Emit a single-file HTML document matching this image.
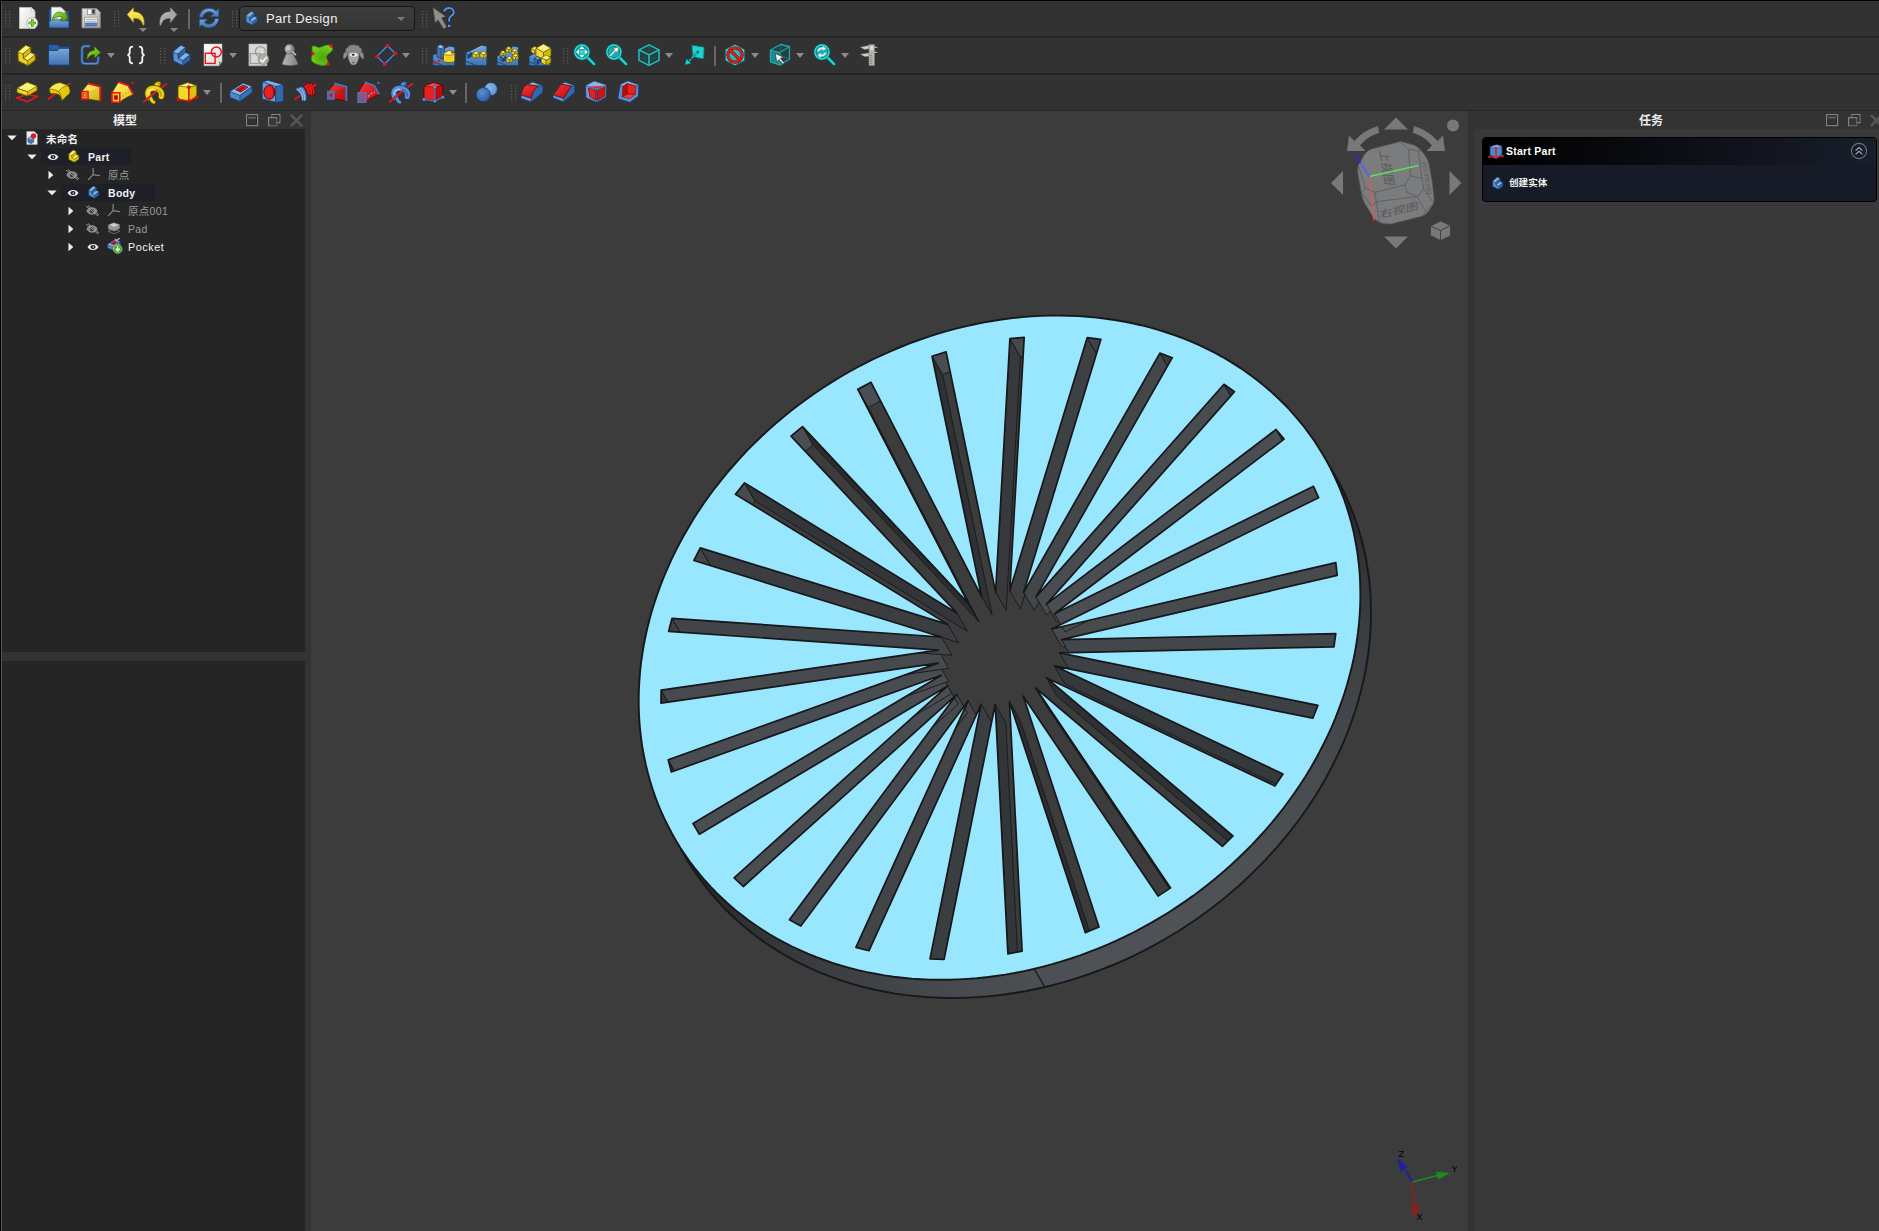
<!DOCTYPE html><html><head><meta charset="utf-8"><title>FreeCAD</title><style>
*{box-sizing:border-box;margin:0;padding:0}
html,body{width:1879px;height:1231px;overflow:hidden;background:#2f2f2f;font-family:"Liberation Sans","Noto Sans CJK SC",sans-serif;}
.abs{position:absolute}
#root{position:relative;width:1879px;height:1231px;overflow:hidden;background:#323232}
.tsep{position:absolute;left:0;width:1879px;height:2px;background:#242424}
.grip{position:absolute;width:6px;height:16px}
.vsep{position:absolute;width:2px;height:20px;background:#666}
.dd{position:absolute;width:0;height:0;border-left:4.5px solid transparent;border-right:4.5px solid transparent;border-top:5px solid #8c8c8c}
.ic{position:absolute}
.hdr{position:absolute;background:#333333;color:#ececec;font-weight:bold;font-size:12px;text-align:center;line-height:18px}
.tree{position:absolute;background:#252525}
.row{position:absolute;height:18px;line-height:18px;font-size:10.5px;white-space:nowrap}
.hl{position:absolute;background:#1d2027;height:17px}
.b{font-weight:bold;color:#f2f2f2;letter-spacing:0.3px}
.g{color:#9b9b9b;letter-spacing:0.3px}
.w{color:#f3f3f3;letter-spacing:0.55px;font-size:10.8px}
</style></head><body><div id="root">
<svg width="0" height="0" style="position:absolute"><defs>
<linearGradient id="gy" x1="0" y1="0" x2="1" y2="1"><stop offset="0" stop-color="#fff27a"/><stop offset="1" stop-color="#e6c80a"/></linearGradient>
<linearGradient id="gb" x1="0" y1="0" x2="0" y2="1"><stop offset="0" stop-color="#7aa7d6"/><stop offset="1" stop-color="#3f72b0"/></linearGradient>
<linearGradient id="gr" x1="0" y1="0" x2="1" y2="1"><stop offset="0" stop-color="#f23a3a"/><stop offset="1" stop-color="#c40808"/></linearGradient>
<linearGradient id="gg" x1="0" y1="0" x2="1" y2="1"><stop offset="0" stop-color="#9be63f"/><stop offset="1" stop-color="#4e9a06"/></linearGradient>
<linearGradient id="gp" x1="0" y1="0" x2="1" y2="1"><stop offset="0" stop-color="#ffffff"/><stop offset="1" stop-color="#d6d7d3"/></linearGradient>
<linearGradient id="gs" x1="0" y1="0" x2="1" y2="1"><stop offset="0" stop-color="#e3e3df"/><stop offset="1" stop-color="#a9aaa5"/></linearGradient>
<linearGradient id="gc" x1="0" y1="0" x2="1" y2="1"><stop offset="0" stop-color="#3be3e5"/><stop offset="1" stop-color="#12a9ab"/></linearGradient>
</defs></svg>
<div class="abs" style="left:0;top:0;width:1879px;height:1px;background:#050505"></div>
<div class="tsep" style="top:36px"></div>
<div class="tsep" style="top:73px"></div>
<div class="tsep" style="top:110px;height:1px;background:#262626"></div>
<svg class="grip" style="left:5px;top:11px" viewBox="0 0 6 16"><rect x="0" y="0.0" width="1.2" height="1.2" fill="#5a5a5a"/><rect x="0" y="2.9" width="1.2" height="1.2" fill="#5a5a5a"/><rect x="0" y="5.8" width="1.2" height="1.2" fill="#5a5a5a"/><rect x="0" y="8.7" width="1.2" height="1.2" fill="#5a5a5a"/><rect x="0" y="11.6" width="1.2" height="1.2" fill="#5a5a5a"/><rect x="0" y="14.5" width="1.2" height="1.2" fill="#5a5a5a"/><rect x="4" y="0.0" width="1.2" height="1.2" fill="#5a5a5a"/><rect x="4" y="2.9" width="1.2" height="1.2" fill="#5a5a5a"/><rect x="4" y="5.8" width="1.2" height="1.2" fill="#5a5a5a"/><rect x="4" y="8.7" width="1.2" height="1.2" fill="#5a5a5a"/><rect x="4" y="11.6" width="1.2" height="1.2" fill="#5a5a5a"/><rect x="4" y="14.5" width="1.2" height="1.2" fill="#5a5a5a"/></svg>
<svg class="ic" style="left:17.0px;top:6.0px" width="24" height="24" viewBox="0 0 24 24"><path d="M2.500 1.500h11.800l3.700 3.700v17.300h-15.500z" fill="url(#gp)" stroke="#bfc0bc" stroke-width="0.800"/><path d="M14.300 1.500v3.700h3.700z" fill="#f4f4f2" stroke="#b5b6b2" stroke-width="0.6"/><circle cx="15.3" cy="17" r="5.5" fill="#f5f5f3" stroke="#a8a9a5" stroke-width="0.8"/><path d="M15.3 13.2v7.6M11.5 17h7.6" stroke="#3d8a07" stroke-width="2.6"/><path d="M15.3 13.8v6.4M12.1 17h6.4" stroke="#7fd32a" stroke-width="1.3"/></svg>
<svg class="ic" style="left:47.0px;top:6.0px" width="24" height="24" viewBox="0 0 24 24"><path d="M2 3h3v18h-3zM19 5h3v16h-3z" fill="#2c5a9b" stroke="#173a66" stroke-width="0.6"/><path d="M4.5 1.2h9.5l4.5 4.5v12h-14z" fill="url(#gp)" stroke="#bfc0bc" stroke-width="0.7"/><path d="M2 15.5c3-0.2 5-2.5 8-2.3c2 0.2 2.5 1.6 5 1.6h7v7.2h-20z" fill="url(#gb)" stroke="#173a66" stroke-width="0.8"/><path d="M5.400 13.800C5.800 9.500 8.500 6.300 12 6.200C14 6.200 15.500 6.800 16.800 7.800L18.800 5.800L20.800 13.200L13 14.200L15 11.200C13.500 10.300 12 10.200 10.500 10.700C8.500 11.300 6.800 12.400 5.400 13.800Z" fill="url(#gg)" stroke="#3b7a05" stroke-width="0.800" stroke-linejoin="round"/><path d="M2 15.6c3-0.2 5-2.5 8-2.3c1.2 0.1 1.8 0.6 2.6 1v1.5h-10.6z" fill="#6a99cc"/></svg>
<svg class="ic" style="left:79.0px;top:6.0px" width="24" height="24" viewBox="0 0 24 24"><path d="M3 2.5h14.5l3.7 3.7v15.6h-18.2z" fill="url(#gs)" stroke="#8f908b" stroke-width="0.9"/><rect x="8" y="3" width="8.6" height="5.8" fill="#8c8d88"/><rect x="8.8" y="3.4" width="3.6" height="4.6" fill="#fbfbfa"/><rect x="13.5" y="3.8" width="1.8" height="3.6" fill="#2b2b2b"/><rect x="5.6" y="11.2" width="13" height="9.6" fill="#f1f1ef" stroke="#8f908b" stroke-width="0.7"/><path d="M6.6 13.4h11M6.6 15.4h11" stroke="#a6a7a2" stroke-width="0.9"/><rect x="6.6" y="17" width="11" height="3" fill="#4f86c6" stroke="#2f5f9e" stroke-width="0.6"/></svg>
<svg class="grip" style="left:114px;top:11px" viewBox="0 0 6 16"><rect x="0" y="0.0" width="1.2" height="1.2" fill="#5a5a5a"/><rect x="0" y="2.9" width="1.2" height="1.2" fill="#5a5a5a"/><rect x="0" y="5.8" width="1.2" height="1.2" fill="#5a5a5a"/><rect x="0" y="8.7" width="1.2" height="1.2" fill="#5a5a5a"/><rect x="0" y="11.6" width="1.2" height="1.2" fill="#5a5a5a"/><rect x="0" y="14.5" width="1.2" height="1.2" fill="#5a5a5a"/><rect x="4" y="0.0" width="1.2" height="1.2" fill="#5a5a5a"/><rect x="4" y="2.9" width="1.2" height="1.2" fill="#5a5a5a"/><rect x="4" y="5.8" width="1.2" height="1.2" fill="#5a5a5a"/><rect x="4" y="8.7" width="1.2" height="1.2" fill="#5a5a5a"/><rect x="4" y="11.6" width="1.2" height="1.2" fill="#5a5a5a"/><rect x="4" y="14.5" width="1.2" height="1.2" fill="#5a5a5a"/></svg>
<svg class="ic" style="left:126.0px;top:6.0px" width="22" height="22" viewBox="0 0 24 24"><path d="M1.3 9.2L8.2 1.8v4.6c7.5 0 12 4.6 11.6 13.2c-0.1 1.6-0.8 2.2-1.4 0.6c-1.6-5-4.6-7-10.2-6.8v4.6z" fill="url(#gy)" stroke="#a8930a" stroke-width="0.7" stroke-linejoin="round"/><path d="M9 8c6 0 9.5 3.6 9.7 9.5" stroke="#fff9b0" stroke-width="1" fill="none" opacity="0.7"/></svg>
<svg class="ic" style="left:156.0px;top:6.0px" width="22" height="22" viewBox="0 0 24 24"><path d="M22.7 9.2L15.8 1.8v4.6c-7.5 0-12 4.6-11.6 13.2c0.1 1.6 0.8 2.2 1.4 0.6c1.6-5 4.6-7 10.2-6.8v4.6z" fill="#a9a9a9" stroke="#8c8c8c" stroke-width="0.7" stroke-linejoin="round"/><path d="M15 8c-6 0-9.5 3.6-9.7 9.5" stroke="#c9c9c9" stroke-width="1" fill="none" opacity="0.7"/></svg>
<div class="dd" style="left:138.5px;top:27.5px;border-left-width:4.5px;border-right-width:4.5px;border-top-width:4.5px;border-top-color:#858585"></div>
<div class="dd" style="left:169.5px;top:27.5px;border-left-width:4.5px;border-right-width:4.5px;border-top-width:4.5px;border-top-color:#858585"></div>
<div class="vsep" style="left:188.0px;top:9.0px"></div>
<svg class="ic" style="left:197.0px;top:6.0px" width="24" height="24" viewBox="0 0 24 24"><path d="M2.2 11.5c0.3-5.4 4.4-9.3 9.8-9.3c3 0 5.3 1 7.2 2.9l2.6-2.6v8.3h-8.3l3.1-3.1c-1.3-1.2-2.7-1.8-4.6-1.8c-3.2 0-5.6 2.3-6 5.6z" fill="url(#gb)" stroke="#1d4a85" stroke-width="0.8" stroke-linejoin="round"/><path d="M21.8 12.5c-0.3 5.4-4.4 9.3-9.8 9.3c-3 0-5.3-1-7.2-2.9l-2.6 2.6v-8.3h8.3l-3.1 3.1c1.3 1.2 2.7 1.8 4.6 1.8c3.2 0 5.6-2.3 6-5.6z" fill="url(#gb)" stroke="#1d4a85" stroke-width="0.8" stroke-linejoin="round"/></svg>
<svg class="grip" style="left:232px;top:11px" viewBox="0 0 6 16"><rect x="0" y="0.0" width="1.2" height="1.2" fill="#5a5a5a"/><rect x="0" y="2.9" width="1.2" height="1.2" fill="#5a5a5a"/><rect x="0" y="5.8" width="1.2" height="1.2" fill="#5a5a5a"/><rect x="0" y="8.7" width="1.2" height="1.2" fill="#5a5a5a"/><rect x="0" y="11.6" width="1.2" height="1.2" fill="#5a5a5a"/><rect x="0" y="14.5" width="1.2" height="1.2" fill="#5a5a5a"/><rect x="4" y="0.0" width="1.2" height="1.2" fill="#5a5a5a"/><rect x="4" y="2.9" width="1.2" height="1.2" fill="#5a5a5a"/><rect x="4" y="5.8" width="1.2" height="1.2" fill="#5a5a5a"/><rect x="4" y="8.7" width="1.2" height="1.2" fill="#5a5a5a"/><rect x="4" y="11.6" width="1.2" height="1.2" fill="#5a5a5a"/><rect x="4" y="14.5" width="1.2" height="1.2" fill="#5a5a5a"/></svg>
<div class="abs" style="left:239px;top:6px;width:176px;height:25px;border:1px solid #151515;border-radius:4px;background:linear-gradient(#3d3d3d,#343434)"></div>
<svg class="ic" style="left:244.0px;top:10.0px" width="16" height="16" viewBox="0 0 24 24"><path d="M2.800 9L10.800 2.300L15.600 4.400L15.600 9.600L20.200 11.700L20.200 17.100L12.700 22.800L3.100 18.200Z" fill="#5b8fd0" stroke="#173a66" stroke-width="1.300" stroke-linejoin="round"/><path d="M2.800 9L10.800 2.300L15.600 4.400L8 10.900Z" fill="#86b2e3" stroke="#173a66" stroke-width="0.600" stroke-linejoin="round"/><path d="M8 10.900L15.600 4.400L15.600 9.600L8.500 15.500Z" fill="#2f64aa" stroke="#173a66" stroke-width="0.600" stroke-linejoin="round"/><path d="M8.500 15.500L15.600 9.600L20.200 11.700L12.700 17.800Z" fill="#86b2e3" stroke="#173a66" stroke-width="0.600" stroke-linejoin="round"/><path d="M12.700 17.800L20.200 11.700L20.200 17.100L12.700 22.800Z" fill="#2f64aa" stroke="#173a66" stroke-width="0.600" stroke-linejoin="round"/><path d="M8 10.900L8.500 15.500L12.700 17.800" fill="none" stroke="#173a66" stroke-width="0.600"/></svg>
<div class="abs" style="left:266px;top:11px;font-size:13px;line-height:16px;color:#f0f0f0;letter-spacing:0.35px">Part Design</div>
<div class="dd" style="left:397px;top:16.5px;border-left-width:4px;border-right-width:4px;border-top-width:4px;border-top-color:#777"></div>
<svg class="grip" style="left:422px;top:11px" viewBox="0 0 6 16"><rect x="0" y="0.0" width="1.2" height="1.2" fill="#5a5a5a"/><rect x="0" y="2.9" width="1.2" height="1.2" fill="#5a5a5a"/><rect x="0" y="5.8" width="1.2" height="1.2" fill="#5a5a5a"/><rect x="0" y="8.7" width="1.2" height="1.2" fill="#5a5a5a"/><rect x="0" y="11.6" width="1.2" height="1.2" fill="#5a5a5a"/><rect x="0" y="14.5" width="1.2" height="1.2" fill="#5a5a5a"/><rect x="4" y="0.0" width="1.2" height="1.2" fill="#5a5a5a"/><rect x="4" y="2.9" width="1.2" height="1.2" fill="#5a5a5a"/><rect x="4" y="5.8" width="1.2" height="1.2" fill="#5a5a5a"/><rect x="4" y="8.7" width="1.2" height="1.2" fill="#5a5a5a"/><rect x="4" y="11.6" width="1.2" height="1.2" fill="#5a5a5a"/><rect x="4" y="14.5" width="1.2" height="1.2" fill="#5a5a5a"/></svg>
<svg class="ic" style="left:432.0px;top:6.0px" width="24" height="24" viewBox="0 0 24 24"><path d="M1 1.600L13.800 10.500L9.600 11.800L14.600 20.900L11.700 22.800L6 13.900L3.100 16.800Z" fill="#8f9189" stroke="#4a4c46" stroke-width="0.700" stroke-linejoin="round"/><path d="M12.300 4.800C13.500 2.600 15.500 2 17.200 2C20 2 21.800 4 21.800 6.400C21.800 10 17.200 9.500 17.200 13V15" fill="none" stroke="#10233f" stroke-width="3.200" stroke-linecap="round"/><path d="M12.300 4.800C13.500 2.600 15.500 2 17.200 2C20 2 21.800 4 21.800 6.400C21.800 10 17.200 9.500 17.200 13V15" fill="none" stroke="#5b94dc" stroke-width="1.900" stroke-linecap="round"/><circle cx="17.200" cy="19.900" r="2" fill="#10233f"/><circle cx="17.200" cy="19.900" r="1.400" fill="#5b94dc"/></svg>
<svg class="grip" style="left:5px;top:48px" viewBox="0 0 6 16"><rect x="0" y="0.0" width="1.2" height="1.2" fill="#5a5a5a"/><rect x="0" y="2.9" width="1.2" height="1.2" fill="#5a5a5a"/><rect x="0" y="5.8" width="1.2" height="1.2" fill="#5a5a5a"/><rect x="0" y="8.7" width="1.2" height="1.2" fill="#5a5a5a"/><rect x="0" y="11.6" width="1.2" height="1.2" fill="#5a5a5a"/><rect x="0" y="14.5" width="1.2" height="1.2" fill="#5a5a5a"/><rect x="4" y="0.0" width="1.2" height="1.2" fill="#5a5a5a"/><rect x="4" y="2.9" width="1.2" height="1.2" fill="#5a5a5a"/><rect x="4" y="5.8" width="1.2" height="1.2" fill="#5a5a5a"/><rect x="4" y="8.7" width="1.2" height="1.2" fill="#5a5a5a"/><rect x="4" y="11.6" width="1.2" height="1.2" fill="#5a5a5a"/><rect x="4" y="14.5" width="1.2" height="1.2" fill="#5a5a5a"/></svg>
<svg class="ic" style="left:15.0px;top:43.0px" width="24" height="24" viewBox="0 0 24 24"><path d="M2.800 9L10.800 2.300L15.600 4.400L15.600 9.600L20.200 11.700L20.200 17.100L12.700 22.800L3.100 18.200Z" fill="#ecd21c" stroke="#5c5200" stroke-width="1.300" stroke-linejoin="round"/><path d="M2.800 9L10.800 2.300L15.600 4.400L8 10.900Z" fill="#fff27a" stroke="#5c5200" stroke-width="0.600" stroke-linejoin="round"/><path d="M8 10.900L15.600 4.400L15.600 9.600L8.500 15.500Z" fill="#d8bc0c" stroke="#5c5200" stroke-width="0.600" stroke-linejoin="round"/><path d="M8.500 15.500L15.600 9.600L20.200 11.700L12.700 17.800Z" fill="#fff27a" stroke="#5c5200" stroke-width="0.600" stroke-linejoin="round"/><path d="M12.700 17.800L20.200 11.700L20.200 17.100L12.700 22.800Z" fill="#d8bc0c" stroke="#5c5200" stroke-width="0.600" stroke-linejoin="round"/><path d="M8 10.900L8.500 15.500L12.700 17.800" fill="none" stroke="#5c5200" stroke-width="0.600"/></svg>
<svg class="ic" style="left:47.0px;top:43.0px" width="24" height="24" viewBox="0 0 24 24"><path d="M1.500 1.500h8.500l2 2.200h10.500v18.500h-21z" fill="#2c5ea6" stroke="#173a66" stroke-width="0.9" stroke-linejoin="round"/><path d="M1.500 7.400h8.800l2-2.200h10.200v17h-21z" fill="url(#gb)" stroke="#173a66" stroke-width="0.9" stroke-linejoin="round"/></svg>
<svg class="ic" style="left:79.0px;top:43.0px" width="24" height="24" viewBox="0 0 24 24"><g transform="translate(1.2,1.2) scale(0.9)"><path d="M10 2.200h-4.500c-2.200 0-3.500 1.300-3.500 3.500v12.300c0 2.200 1.300 3.500 3.500 3.500h11c2.200 0 3.500-1.300 3.500-3.500v-3.500" fill="none" stroke="#2c5a9b" stroke-width="3" stroke-linecap="round"/><path d="M10 2.200h-4.500c-2.200 0-3.500 1.300-3.500 3.500v12.300c0 2.200 1.300 3.500 3.500 3.500h11c2.200 0 3.500-1.300 3.500-3.500v-3.500" fill="none" stroke="#5b8fd0" stroke-width="1.300" stroke-linecap="round"/><path d="M7.800 16.800c-0.600-5.800 2.400-9.600 8-9.800v-4.200l7 6.400l-7 6.200v-4c-3.600-0.200-6 1.600-8 5.400z" fill="url(#gg)" stroke="#3b7a05" stroke-width="0.800" stroke-linejoin="round"/></g></svg>
<div class="dd" style="left:107.0px;top:53.0px"></div>
<svg class="ic" style="left:124.0px;top:43.0px" width="24" height="24" viewBox="0 0 24 24"><g transform="translate(1.2,1.2) scale(0.9)"><path d="M8.600 2.800c-2.800 0-3.600 1-3.600 3.200v3.200c0 1.600-0.800 2.400-2.400 2.800c1.600 0.400 2.400 1.200 2.400 2.800v3.200c0 2.200 0.800 3.200 3.600 3.200M15.400 2.800c2.800 0 3.600 1 3.600 3.200v3.200c0 1.600 0.800 2.400 2.400 2.800c-1.600 0.400-2.400 1.200-2.400 2.800v3.200c0 2.200-0.800 3.200-3.600 3.200" fill="none" stroke="#f4f4f4" stroke-width="2"/></g></svg>
<svg class="grip" style="left:160px;top:48px" viewBox="0 0 6 16"><rect x="0" y="0.0" width="1.2" height="1.2" fill="#5a5a5a"/><rect x="0" y="2.9" width="1.2" height="1.2" fill="#5a5a5a"/><rect x="0" y="5.8" width="1.2" height="1.2" fill="#5a5a5a"/><rect x="0" y="8.7" width="1.2" height="1.2" fill="#5a5a5a"/><rect x="0" y="11.6" width="1.2" height="1.2" fill="#5a5a5a"/><rect x="0" y="14.5" width="1.2" height="1.2" fill="#5a5a5a"/><rect x="4" y="0.0" width="1.2" height="1.2" fill="#5a5a5a"/><rect x="4" y="2.9" width="1.2" height="1.2" fill="#5a5a5a"/><rect x="4" y="5.8" width="1.2" height="1.2" fill="#5a5a5a"/><rect x="4" y="8.7" width="1.2" height="1.2" fill="#5a5a5a"/><rect x="4" y="11.6" width="1.2" height="1.2" fill="#5a5a5a"/><rect x="4" y="14.5" width="1.2" height="1.2" fill="#5a5a5a"/></svg>
<svg class="ic" style="left:169.5px;top:43.0px" width="24" height="24" viewBox="0 0 24 24"><path d="M2.800 9L10.800 2.300L15.600 4.400L15.600 9.600L20.200 11.700L20.200 17.100L12.700 22.800L3.100 18.200Z" fill="#5b8fd0" stroke="#173a66" stroke-width="1.300" stroke-linejoin="round"/><path d="M2.800 9L10.800 2.300L15.600 4.400L8 10.900Z" fill="#86b2e3" stroke="#173a66" stroke-width="0.600" stroke-linejoin="round"/><path d="M8 10.900L15.600 4.400L15.600 9.600L8.500 15.500Z" fill="#2f64aa" stroke="#173a66" stroke-width="0.600" stroke-linejoin="round"/><path d="M8.500 15.500L15.600 9.600L20.200 11.700L12.700 17.800Z" fill="#86b2e3" stroke="#173a66" stroke-width="0.600" stroke-linejoin="round"/><path d="M12.700 17.800L20.200 11.700L20.200 17.100L12.700 22.800Z" fill="#2f64aa" stroke="#173a66" stroke-width="0.600" stroke-linejoin="round"/><path d="M8 10.900L8.500 15.500L12.700 17.800" fill="none" stroke="#173a66" stroke-width="0.600"/></svg>
<svg class="ic" style="left:201.0px;top:43.0px" width="24" height="24" viewBox="0 0 24 24"><path d="M3 1h18v17.800l-3 4h-15z" fill="url(#gp)" stroke="#c8c9c5" stroke-width="0.500"/><path d="M18 18.800v4l3-4z" fill="#8f908c"/><circle cx="15.300" cy="9" r="5" fill="none" stroke="#e8141c" stroke-width="1.400"/><rect x="4.300" y="10.300" width="9.800" height="10.100" fill="none" stroke="#e8141c" stroke-width="1.400"/></svg>
<div class="dd" style="left:229.0px;top:53.0px"></div>
<svg class="ic" style="left:247.0px;top:43.0px" width="24" height="24" viewBox="0 0 24 24"><path d="M1.900 1h18v21.800h-18z" fill="#d9dad6" stroke="#a9aaa6" stroke-width="0.600"/><circle cx="13.400" cy="8.600" r="5" fill="none" stroke="#9b9c98" stroke-width="1.300"/><rect x="3.400" y="10.600" width="9.600" height="9.900" fill="none" stroke="#9b9c98" stroke-width="1.300"/><circle cx="16.400" cy="16.300" r="5.400" fill="#a9aaa6" stroke="#8d8e8a" stroke-width="0.700"/><path d="M13.300 16.500l2.300 2.500l4.200-5.200" fill="none" stroke="#ececea" stroke-width="1.900"/></svg>
<svg class="ic" style="left:278.0px;top:43.0px" width="24" height="24" viewBox="0 0 24 24"><defs><linearGradient id="gpw" x1="0" y1="0" x2="1" y2="0"><stop offset="0" stop-color="#b9bab6"/><stop offset="1" stop-color="#7f807c"/></linearGradient></defs><path d="M4.200 21.300c1-4 3-7 4.200-10.700h6.600c1.200 3.700 3.900 6.700 4.900 10.700c-4 1.500-11.700 1.500-15.700 0z" fill="url(#gpw)" stroke="#6e6f6b" stroke-width="0.600"/><circle cx="11.500" cy="6" r="4.700" fill="url(#gpw)" stroke="#6e6f6b" stroke-width="0.600"/><circle cx="10.500" cy="5" r="2.300" fill="#d5d6d2" opacity="0.700"/><path d="M14.500 8.500l3.500 3.700" stroke="#c9cac6" stroke-width="1.500"/></svg>
<svg class="ic" style="left:311.0px;top:43.0px" width="24" height="24" viewBox="0 0 24 24"><defs><radialGradient id="ggr" cx="0.55" cy="0.6" r="0.6"><stop offset="0" stop-color="#4aa70c"/><stop offset="1" stop-color="#6fd11c"/></radialGradient></defs><path d="M1.300 3.200c2.500-1 5 1.800 7.500 1.200c3.500-0.800 7-3.500 11.200-1.700c1.500 1.200 1.800 2.800 1.300 4.200c-1.200 3-5.300 3.800-5.800 6.500c-0.500 2.800 2.200 5 1.600 7.700c-2.500 1.600-5.800 1.600-8.600 0.800c-3-0.800-6.500-1.800-8-4.400c-0.600-2.500 0.800-4.600 1-7.100c0.200-2.500-1-5-0.200-7.200z" fill="url(#ggr)" stroke="#3f8f08" stroke-width="0.800"/><circle cx="20.200" cy="3" r="1.800" fill="#e8141c"/><circle cx="1.900" cy="10.600" r="1.800" fill="#e8141c"/><circle cx="17.100" cy="21" r="1.800" fill="#e8141c"/></svg>
<svg class="ic" style="left:341.0px;top:43.0px" width="24" height="24" viewBox="0 0 24 24"><path d="M5.500 8.500c-2.500 0.500-3.800 3.500-3 7.500c1.800-0.500 3.200-2 4-4.500zM19.500 8.500c2.500 0.500 3.800 3.500 3 7.500c-1.800-0.500-3.200-2-4-4.500z" fill="#8d8e90" stroke="#66676a" stroke-width="0.500"/><path d="M5 9c-1-2.500 0.300-4.300 2-4.600c0.500-1.800 2.300-2.600 3.800-2c1-1 2.800-1 3.800 0c1.500-0.600 3.300 0.200 3.800 2c1.700 0.300 3 2.100 2 4.600c-1 1.800-3 2.300-4 2h-7.400c-1 0.300-3-0.200-4-2z" fill="#858688" stroke="#66676a" stroke-width="0.500"/><path d="M7.200 10c1.500-1.500 9.100-1.500 10.600 0c0.800 3.500-0.500 7-1.800 9.500c-0.800 1.800-2 2.500-3.500 2.500s-2.700-0.700-3.500-2.500c-1.300-2.500-2.600-6-1.800-9.500z" fill="#a3a4a6" stroke="#707173" stroke-width="0.500"/><ellipse cx="12.700" cy="11.800" rx="4" ry="1.900" fill="#ececec"/><ellipse cx="12.200" cy="11.800" rx="1.500" ry="1" fill="#2a2a2a"/><path d="M11 19.300h3M12.500 19.300v1.500" stroke="#4a4a4a" stroke-width="0.700"/></svg>
<svg class="ic" style="left:374.0px;top:43.0px" width="24" height="24" viewBox="0 0 24 24"><path d="M13.500 2.800l7.700 7.600l-10.600 10.700l-7.600-7.700z" fill="none" stroke="#173a66" stroke-width="2.400" stroke-linejoin="round"/><path d="M13.500 2.800l7.700 7.600l-10.600 10.700l-7.600-7.700z" fill="none" stroke="#4f8fd6" stroke-width="1.300" stroke-linejoin="round"/><circle cx="13.500" cy="2.800" r="1.900" fill="#e8141c"/><circle cx="21.200" cy="10.400" r="1.900" fill="#e8141c"/><circle cx="10.600" cy="21.100" r="1.900" fill="#e8141c"/><circle cx="3" cy="13.400" r="1.900" fill="#e8141c"/></svg>
<div class="dd" style="left:402.0px;top:53.0px"></div>
<svg class="grip" style="left:422px;top:48px" viewBox="0 0 6 16"><rect x="0" y="0.0" width="1.2" height="1.2" fill="#5a5a5a"/><rect x="0" y="2.9" width="1.2" height="1.2" fill="#5a5a5a"/><rect x="0" y="5.8" width="1.2" height="1.2" fill="#5a5a5a"/><rect x="0" y="8.7" width="1.2" height="1.2" fill="#5a5a5a"/><rect x="0" y="11.6" width="1.2" height="1.2" fill="#5a5a5a"/><rect x="0" y="14.5" width="1.2" height="1.2" fill="#5a5a5a"/><rect x="4" y="0.0" width="1.2" height="1.2" fill="#5a5a5a"/><rect x="4" y="2.9" width="1.2" height="1.2" fill="#5a5a5a"/><rect x="4" y="5.8" width="1.2" height="1.2" fill="#5a5a5a"/><rect x="4" y="8.7" width="1.2" height="1.2" fill="#5a5a5a"/><rect x="4" y="11.6" width="1.2" height="1.2" fill="#5a5a5a"/><rect x="4" y="14.5" width="1.2" height="1.2" fill="#5a5a5a"/></svg>
<svg class="ic" style="left:432.0px;top:43.0px" width="24" height="24" viewBox="0 0 24 24"><path d="M0.800 12l4.500-1.800l7.500-5l4.800-2.200l5.200 1.200v18.600h-22z" fill="url(#gb)" stroke="#173a66" stroke-width="0.900" stroke-linejoin="round"/><path d="M0.800 18l10 4.600" stroke="#173a66" stroke-width="0.800"/><path d="M4.900 4.200l3.200-2.600l4.300 1.800v10l-3.400 2.300l-4.100-2z" fill="#3f72b0" stroke="#173a66" stroke-width="0.800" stroke-linejoin="round"/><path d="M4.900 4.200l3.200-2.600l4.300 1.800l-3.400 2.400z" fill="#9cc0ea" stroke="#173a66" stroke-width="0.600" stroke-linejoin="round"/><path d="M9 5.800v9.900" stroke="#173a66" stroke-width="0.600"/><path d="M11.600 10.500l5.600-3.300l5.600 3.300v6.800c0 3.200-11.200 3.200-11.200 0z" fill="#edd11a" stroke="#5c5200" stroke-width="0.900" stroke-linejoin="round"/><path d="M11.600 10.500l5.600-3.300l5.600 3.300c0 2.200-11.200 2.200-11.200 0z" fill="#fff27a" stroke="#5c5200" stroke-width="0.600" stroke-linejoin="round"/><path d="M12.500 12.500v6M21.500 12.500v6" stroke="#fff7a0" stroke-width="0.800" opacity="0.600"/><path d="M2.300 20.600l8.500-5.200M19.500 10.200l3.300-2" stroke="#e8141c" stroke-width="1.700" stroke-dasharray="2.600 1.600"/></svg>
<svg class="ic" style="left:464.0px;top:43.0px" width="24" height="24" viewBox="0 0 24 24"><path d="M1.300 10.500l16.400-8.200l5.200 0.800v19.700h-21.600z" fill="url(#gb)" stroke="#173a66" stroke-width="0.900" stroke-linejoin="round"/><path d="M1.300 17.800l11.500 5" stroke="#173a66" stroke-width="0.800"/><path d="M2 11l15.700-7.800" stroke="#a9c8ea" stroke-width="0.600"/><path d="M1.3 10.1l3.2 -1.8l3.2 1.8l-3.2 1.8z" fill="#6a9bd6" stroke="#0f2a52" stroke-width="0.6" stroke-linejoin="round"/><path d="M1.3 10.1l3.2 1.8v3.2l-3.2 -1.8z" fill="#3f72b0" stroke="#0f2a52" stroke-width="0.6" stroke-linejoin="round"/><path d="M4.5 11.9l3.2 -1.8v3.2l-3.2 1.8z" fill="#1f4f91" stroke="#0f2a52" stroke-width="0.6" stroke-linejoin="round"/><path d="M8.6 10.2l3.4 -1.9l3.4 1.9l-3.4 1.9z" fill="#fff27a" stroke="#5c5200" stroke-width="0.6" stroke-linejoin="round"/><path d="M8.6 10.2l3.4 1.9v3.4l-3.4 -1.9z" fill="#f2d92c" stroke="#5c5200" stroke-width="0.6" stroke-linejoin="round"/><path d="M12.0 12.1l3.4 -1.9v3.4l-3.4 1.9z" fill="#d4b808" stroke="#5c5200" stroke-width="0.6" stroke-linejoin="round"/><path d="M16.0 10.2l3.4 -1.9l3.4 1.9l-3.4 1.9z" fill="#fff27a" stroke="#5c5200" stroke-width="0.6" stroke-linejoin="round"/><path d="M16.0 10.2l3.4 1.9v3.4l-3.4 -1.9z" fill="#f2d92c" stroke="#5c5200" stroke-width="0.6" stroke-linejoin="round"/><path d="M19.4 12.1l3.4 -1.9v3.4l-3.4 1.9z" fill="#d4b808" stroke="#5c5200" stroke-width="0.6" stroke-linejoin="round"/></svg>
<svg class="ic" style="left:496.0px;top:43.0px" width="24" height="24" viewBox="0 0 24 24"><path d="M1 13.300l16.400-10l5.200 0.800v18.700h-21.600z" fill="url(#gb)" stroke="#173a66" stroke-width="0.900" stroke-linejoin="round"/><path d="M1 18.500l10 4.300" stroke="#173a66" stroke-width="0.800"/><path d="M4.2 9.2l2.8 -1.6l2.8 1.6l-2.8 1.6z" fill="#fff27a" stroke="#5c5200" stroke-width="0.6" stroke-linejoin="round"/><path d="M4.2 9.2l2.8 1.6v2.8l-2.8 -1.6z" fill="#f2d92c" stroke="#5c5200" stroke-width="0.6" stroke-linejoin="round"/><path d="M7.0 10.7l2.8 -1.6v2.8l-2.8 1.6z" fill="#d4b808" stroke="#5c5200" stroke-width="0.6" stroke-linejoin="round"/><path d="M9.8 5.2l2.9 -1.6l2.9 1.6l-2.9 1.6z" fill="#fff27a" stroke="#5c5200" stroke-width="0.6" stroke-linejoin="round"/><path d="M9.8 5.2l2.9 1.6v2.9l-2.9 -1.6z" fill="#f2d92c" stroke="#5c5200" stroke-width="0.6" stroke-linejoin="round"/><path d="M12.7 6.8l2.9 -1.6v2.9l-2.9 1.6z" fill="#d4b808" stroke="#5c5200" stroke-width="0.6" stroke-linejoin="round"/><path d="M15.8 7.5l3.0 -1.7l3.0 1.7l-3.0 1.7z" fill="#fff27a" stroke="#5c5200" stroke-width="0.6" stroke-linejoin="round"/><path d="M15.8 7.5l3.0 1.7v3.0l-3.0 -1.7z" fill="#f2d92c" stroke="#5c5200" stroke-width="0.6" stroke-linejoin="round"/><path d="M18.8 9.2l3.0 -1.7v3.0l-3.0 1.7z" fill="#d4b808" stroke="#5c5200" stroke-width="0.6" stroke-linejoin="round"/><path d="M16.5 12.5l3.0 -1.7l3.0 1.7l-3.0 1.7z" fill="#fff27a" stroke="#5c5200" stroke-width="0.6" stroke-linejoin="round"/><path d="M16.5 12.5l3.0 1.7v3.0l-3.0 -1.7z" fill="#f2d92c" stroke="#5c5200" stroke-width="0.6" stroke-linejoin="round"/><path d="M19.5 14.2l3.0 -1.7v3.0l-3.0 1.7z" fill="#d4b808" stroke="#5c5200" stroke-width="0.6" stroke-linejoin="round"/><path d="M4.2 14.0l2.9 -1.6l2.9 1.6l-2.9 1.6z" fill="#6a9bd6" stroke="#0f2a52" stroke-width="0.6" stroke-linejoin="round"/><path d="M4.2 14.0l2.9 1.6v2.9l-2.9 -1.6z" fill="#3f72b0" stroke="#0f2a52" stroke-width="0.6" stroke-linejoin="round"/><path d="M7.1 15.6l2.9 -1.6v2.9l-2.9 1.6z" fill="#1f4f91" stroke="#0f2a52" stroke-width="0.6" stroke-linejoin="round"/><path d="M10.2 15.2l3.1 -1.8l3.1 1.8l-3.1 1.8z" fill="#fff27a" stroke="#5c5200" stroke-width="0.6" stroke-linejoin="round"/><path d="M10.2 15.2l3.1 1.8v3.1l-3.1 -1.8z" fill="#f2d92c" stroke="#5c5200" stroke-width="0.6" stroke-linejoin="round"/><path d="M13.3 16.9l3.1 -1.8v3.1l-3.1 1.8z" fill="#d4b808" stroke="#5c5200" stroke-width="0.6" stroke-linejoin="round"/></svg>
<svg class="ic" style="left:528.0px;top:43.0px" width="24" height="24" viewBox="0 0 24 24"><path d="M1 13.300l16.400-10l5.200 0.800v18.700h-21.600z" fill="url(#gb)" stroke="#173a66" stroke-width="0.900" stroke-linejoin="round"/><path d="M1 18.500l10 4.300" stroke="#173a66" stroke-width="0.800"/><path d="M3.2 5.6l3.5 -2.0l3.5 2.0l-3.5 2.0z" fill="#fff27a" stroke="#5c5200" stroke-width="0.6" stroke-linejoin="round"/><path d="M3.2 5.6l3.5 2.0v3.5l-3.5 -2.0z" fill="#f2d92c" stroke="#5c5200" stroke-width="0.6" stroke-linejoin="round"/><path d="M6.7 7.5l3.5 -2.0v3.5l-3.5 2.0z" fill="#d4b808" stroke="#5c5200" stroke-width="0.6" stroke-linejoin="round"/><path d="M8.0 5.2l7.5 -4.2l7.5 4.2l-7.5 4.2z" fill="#fff27a" stroke="#5c5200" stroke-width="0.6" stroke-linejoin="round"/><path d="M8.0 5.2l7.5 4.2v7.5l-7.5 -4.2z" fill="#f2d92c" stroke="#5c5200" stroke-width="0.6" stroke-linejoin="round"/><path d="M15.5 9.4l7.5 -4.2v7.5l-7.5 4.2z" fill="#d4b808" stroke="#5c5200" stroke-width="0.6" stroke-linejoin="round"/><path d="M6.2 15.4l3.4 -1.9l3.4 1.9l-3.4 1.9z" fill="#6a9bd6" stroke="#0f2a52" stroke-width="0.6" stroke-linejoin="round"/><path d="M6.2 15.4l3.4 1.9v3.4l-3.4 -1.9z" fill="#3f72b0" stroke="#0f2a52" stroke-width="0.6" stroke-linejoin="round"/><path d="M9.6 17.3l3.4 -1.9v3.4l-3.4 1.9z" fill="#1f4f91" stroke="#0f2a52" stroke-width="0.6" stroke-linejoin="round"/><path d="M13.3 14.7l4.8 -2.7l4.8 2.7l-4.8 2.7z" fill="#fff27a" stroke="#5c5200" stroke-width="0.6" stroke-linejoin="round"/><path d="M13.3 14.7l4.8 2.7v4.8l-4.8 -2.7z" fill="#f2d92c" stroke="#5c5200" stroke-width="0.6" stroke-linejoin="round"/><path d="M18.1 17.4l4.8 -2.7v4.8l-4.8 2.7z" fill="#d4b808" stroke="#5c5200" stroke-width="0.6" stroke-linejoin="round"/></svg>
<svg class="grip" style="left:563px;top:48px" viewBox="0 0 6 16"><rect x="0" y="0.0" width="1.2" height="1.2" fill="#5a5a5a"/><rect x="0" y="2.9" width="1.2" height="1.2" fill="#5a5a5a"/><rect x="0" y="5.8" width="1.2" height="1.2" fill="#5a5a5a"/><rect x="0" y="8.7" width="1.2" height="1.2" fill="#5a5a5a"/><rect x="0" y="11.6" width="1.2" height="1.2" fill="#5a5a5a"/><rect x="0" y="14.5" width="1.2" height="1.2" fill="#5a5a5a"/><rect x="4" y="0.0" width="1.2" height="1.2" fill="#5a5a5a"/><rect x="4" y="2.9" width="1.2" height="1.2" fill="#5a5a5a"/><rect x="4" y="5.8" width="1.2" height="1.2" fill="#5a5a5a"/><rect x="4" y="8.7" width="1.2" height="1.2" fill="#5a5a5a"/><rect x="4" y="11.6" width="1.2" height="1.2" fill="#5a5a5a"/><rect x="4" y="14.5" width="1.2" height="1.2" fill="#5a5a5a"/></svg>
<svg class="ic" style="left:573.0px;top:43.0px" width="24" height="24" viewBox="0 0 24 24"><path d="M13.8 13.8L21 21" stroke="#0a5f61" stroke-width="3.800" stroke-linecap="round"/><path d="M13.8 13.8L21 21" stroke="#22d3d5" stroke-width="2.400" stroke-linecap="round"/><circle cx="8.9" cy="8.9" r="7.0" fill="#17aeb0" stroke="#0a5f61" stroke-width="2.600"/><circle cx="8.9" cy="8.9" r="7.0" fill="none" stroke="#2adcde" stroke-width="1.500"/><path d="M8.900 2.800l2.300 3.300h-4.600zM8.900 15l2.300-3.300h-4.600zM2.800 8.900l3.300-2.300v4.600zM15 8.900l-3.300-2.300v4.600z" fill="#f4fbfb"/><rect x="7.300" y="7.300" width="3.200" height="3.200" fill="#3fe0e2"/></svg>
<svg class="ic" style="left:605.0px;top:43.0px" width="24" height="24" viewBox="0 0 24 24"><path d="M13.8 13.8L21 21" stroke="#0a5f61" stroke-width="3.800" stroke-linecap="round"/><path d="M13.8 13.8L21 21" stroke="#22d3d5" stroke-width="2.400" stroke-linecap="round"/><circle cx="8.9" cy="8.9" r="7.0" fill="#17aeb0" stroke="#0a5f61" stroke-width="2.600"/><circle cx="8.9" cy="8.9" r="7.0" fill="none" stroke="#2adcde" stroke-width="1.500"/><path d="M13.800 3.800l-1.200 6.200l-1.700-1.700l-5.200 5.400l-1.400-1.400l5.400-5.200l-1.700-1.700z" fill="#f6f6f4" stroke="#4a4a4a" stroke-width="0.500" stroke-linejoin="round"/></svg>
<svg class="ic" style="left:637.0px;top:43.0px" width="24" height="24" viewBox="0 0 24 24"><path d="M12 1.800l10 5v10.500l-10 5l-10-5v-10.500z" fill="#1f4a4b" fill-opacity="0.550" stroke="#19c3c5" stroke-width="1.500" stroke-linejoin="round"/><path d="M2 6.800l10 5l10-5M12 11.800v10.500" fill="none" stroke="#19c3c5" stroke-width="1.500"/><path d="M12 4v4M7 14.500l1 3.500M17 14.500l-1 3.500" stroke="#0f8f91" stroke-width="0.800" stroke-dasharray="1.500 1.500"/></svg>
<div class="dd" style="left:665.0px;top:53.0px"></div>
<svg class="ic" style="left:683.0px;top:43.0px" width="24" height="24" viewBox="0 0 24 24"><path d="M8.800 2l12.400 2l-0.400 12l-11.300-2z" fill="#22d0d2" stroke="#0a5f61" stroke-width="0.900" stroke-linejoin="round"/><path d="M15 8.800l-8.500 8.700" stroke="#0a5f61" stroke-width="2.600" stroke-dasharray="2.200 1.200"/><path d="M15 8.800l-8.500 8.700" stroke="#25d2d4" stroke-width="1.200" stroke-dasharray="2.200 1.200"/><path d="M1.800 22l1.700-6.300l4.700 4.700z" fill="#25d2d4" stroke="#0a5f61" stroke-width="0.800" stroke-linejoin="round"/><circle cx="15" cy="8.800" r="1.200" fill="#0d7a7c"/></svg>
<div class="vsep" style="left:714.0px;top:46.0px"></div>
<svg class="ic" style="left:723.0px;top:43.0px" width="24" height="24" viewBox="0 0 24 24"><path d="M12 1.300l9.800 5.200v11l-9.800 5.200l-9.800-5.200v-11z" fill="#22cfd1" stroke="#0a5f61" stroke-width="0.900" stroke-linejoin="round"/><path d="M12 2.800l8.300 4.500v9.400l-8.300 4.500l-8.300-4.500v-9.400z" fill="none" stroke="#5ce9ea" stroke-width="0.700"/><circle cx="12" cy="12" r="7.200" fill="#1fbec0" stroke="#7a0a0a" stroke-width="3.200"/><circle cx="12" cy="12" r="7.200" fill="none" stroke="#e01b1b" stroke-width="2.200"/><path d="M6.900 6.900l10.200 10.200" stroke="#7a0a0a" stroke-width="3.200"/><path d="M6.900 6.900l10.200 10.200" stroke="#e01b1b" stroke-width="2.200"/></svg>
<div class="dd" style="left:751.0px;top:53.0px"></div>
<svg class="ic" style="left:768.0px;top:43.0px" width="24" height="24" viewBox="0 0 24 24"><path d="M2.500 7l10-5.500l9 2v12.500l-9.500 6l-9.500-3z" fill="#1f4f50" fill-opacity="0.450" stroke="#17a9ab" stroke-width="1.300" stroke-linejoin="round"/><path d="M2.500 7l9.500 2.500v12.500l-9.500-3z" fill="#1aa7a9" fill-opacity="0.750" stroke="#17a9ab" stroke-width="1.200" stroke-linejoin="round"/><path d="M12 9.500l9.500-6" fill="none" stroke="#17a9ab" stroke-width="1.200"/><path d="M12.500 1.500v11l9 3.500M12.500 12.500l-10 6.500" fill="none" stroke="#0f7f81" stroke-width="0.700"/><path d="M7.200 10.500l8.600 3.800l-3.400 1.100l4 4.500l-1.500 1.300l-4-4.600l-2 2.800z" fill="#f3f3f1" stroke="#333" stroke-width="0.700" stroke-linejoin="round"/></svg>
<div class="dd" style="left:796.0px;top:53.0px"></div>
<svg class="ic" style="left:813.0px;top:43.0px" width="24" height="24" viewBox="0 0 24 24"><path d="M13.8 13.8L21 21" stroke="#0a5f61" stroke-width="3.800" stroke-linecap="round"/><path d="M13.8 13.8L21 21" stroke="#22d3d5" stroke-width="2.400" stroke-linecap="round"/><circle cx="8.9" cy="8.9" r="7.0" fill="#17aeb0" stroke="#0a5f61" stroke-width="2.600"/><circle cx="8.9" cy="8.9" r="7.0" fill="none" stroke="#2adcde" stroke-width="1.500"/><path d="M4.200 8.200c0.600-2.800 3.200-4.300 5.700-3.800l0.200-1.500l3.200 2.900l-3.900 2l0.200-1.400c-1.600-0.300-2.900 0.600-3.400 2zM13.600 9.600c-0.600 2.800-3.200 4.300-5.700 3.800l-0.200 1.500l-3.200-2.900l3.900-2l-0.200 1.400c1.600 0.300 2.900-0.600 3.400-2z" fill="#e4f2f6" stroke="#6fb0c4" stroke-width="0.400"/></svg>
<div class="dd" style="left:841.0px;top:53.0px"></div>
<svg class="ic" style="left:858.0px;top:43.0px" width="24" height="24" viewBox="0 0 24 24"><path d="M11 1.500h5.500v21h-5.500z" fill="#b4b5b0" stroke="#80817c" stroke-width="0.600"/><path d="M2.500 4.200l8.500-1.800v3.400l-4.500 0.600zM2.500 11.200l8.500-1.200v3.200l-4.500 0.400z" fill="#cfd0cc" stroke="#80817c" stroke-width="0.500"/><path d="M16.500 3.500l4 0.800l-4 0.800zM16.500 8.500l4 0.800l-4 0.800z" fill="#cfd0cc"/><path d="M12 3h3.500v4h-3.500z" fill="#d8d9d5"/><path d="M12.200 12.500h2M12.200 14.500h2M12.200 16.500h2M12.200 18.500h2M12.200 20.500h2" stroke="#70716c" stroke-width="0.700"/></svg>
<svg class="grip" style="left:5px;top:85px" viewBox="0 0 6 16"><rect x="0" y="0.0" width="1.2" height="1.2" fill="#5a5a5a"/><rect x="0" y="2.9" width="1.2" height="1.2" fill="#5a5a5a"/><rect x="0" y="5.8" width="1.2" height="1.2" fill="#5a5a5a"/><rect x="0" y="8.7" width="1.2" height="1.2" fill="#5a5a5a"/><rect x="0" y="11.6" width="1.2" height="1.2" fill="#5a5a5a"/><rect x="0" y="14.5" width="1.2" height="1.2" fill="#5a5a5a"/><rect x="4" y="0.0" width="1.2" height="1.2" fill="#5a5a5a"/><rect x="4" y="2.9" width="1.2" height="1.2" fill="#5a5a5a"/><rect x="4" y="5.8" width="1.2" height="1.2" fill="#5a5a5a"/><rect x="4" y="8.7" width="1.2" height="1.2" fill="#5a5a5a"/><rect x="4" y="11.6" width="1.2" height="1.2" fill="#5a5a5a"/><rect x="4" y="14.5" width="1.2" height="1.2" fill="#5a5a5a"/></svg>
<svg class="ic" style="left:15.0px;top:80.0px" width="24" height="24" viewBox="0 0 24 24"><path d="M1.500 17.800l9.800-3l11.400 1.500l-10.400 5.500z" fill="none" stroke="#e8141c" stroke-width="1.600" stroke-linejoin="round"/><path d="M2 8.300l10.100-6l10 3.800v4.500l-9.400 5.400l-10.700-3.600z" fill="#e6c80a" stroke="#5c5200" stroke-width="0.900" stroke-linejoin="round"/><path d="M2 8.300l10.100-6l10 3.800l-9.400 5.700z" fill="#fff27a" stroke="#5c5200" stroke-width="0.700" stroke-linejoin="round"/><path d="M2 8.300l10.700 3.500v4.200l-10.700-3.600z" fill="#f2d92c" stroke="#5c5200" stroke-width="0.700" stroke-linejoin="round"/></svg>
<svg class="ic" style="left:47.0px;top:80.0px" width="24" height="24" viewBox="0 0 24 24"><path d="M0.800 19.500l22.300-16.200" stroke="#e8141c" stroke-width="1.700"/><path d="M2 9c3-4 7-6 11-6.300l8 2.800c1.800 2.500 2.300 5 2 7.500l-8.500 8c0-3-1-5-3-6.500c-2.500-1-5.500-1-7.900-0.500z" fill="#e6c80a" stroke="#5c5200" stroke-width="0.900" stroke-linejoin="round"/><path d="M2 9c3-4 7-6 11-6.300l8 2.800c-4 0.500-7 2.500-9.500 6c-3-1.800-6.500-2.500-9.500-2.500z" fill="#fbe95a" stroke="#5c5200" stroke-width="0.600" stroke-linejoin="round"/><path d="M11.500 11.500c2 2.500 3 6 3 9.500" fill="none" stroke="#5c5200" stroke-width="0.700"/></svg>
<svg class="ic" style="left:79.0px;top:80.0px" width="24" height="24" viewBox="0 0 24 24"><path d="M2.800 11.600l6.500-8.100l12 3.100v14.500l-12.300-2.100h-6.200z" fill="url(#gy)" stroke="#5c5200" stroke-width="0.800" stroke-linejoin="round"/><path d="M9 11.600l12.300-5v14.500l-12.300-2.200z" fill="#000" fill-opacity="0.080"/><path d="M9.300 3.500l12 3.100v14.500" fill="none" stroke="#e8141c" stroke-width="1.900" stroke-linejoin="round"/><rect x="2.800" y="11.600" width="6.200" height="7.400" fill="#f2d92c" stroke="#e8141c" stroke-width="1.600"/><rect x="4.600" y="13.600" width="2.600" height="3.400" fill="#e0c410" stroke="#e8141c" stroke-width="0.800"/></svg>
<svg class="ic" style="left:111.0px;top:80.0px" width="24" height="24" viewBox="0 0 24 24"><path d="M1 12.800c2-3.800 4.500-7.300 6.700-10.700l9.500 3.400l5 8.900c-5.200 2.100-10.200 4.600-13.400 7.900h-7.800z" fill="url(#gy)" stroke="#5c5200" stroke-width="0.800" stroke-linejoin="round"/><path d="M11 16.500c2-2 4.500-3.500 7-4.500" fill="none" stroke="#e89a10" stroke-width="1.300" stroke-dasharray="2 1.500"/><path d="M7.700 2.100l9.500 3.400l5 8.900" fill="none" stroke="#e8141c" stroke-width="1.800" stroke-linejoin="round"/><rect x="1" y="12.800" width="7.800" height="9.400" fill="#f2d92c" stroke="#e8141c" stroke-width="1.600"/><rect x="3.200" y="15.600" width="3.200" height="3.800" fill="#9a0a0a" stroke="#e8141c" stroke-width="0.800"/><circle cx="21.500" cy="2.900" r="1.200" fill="#e8141c"/></svg>
<svg class="ic" style="left:143.0px;top:80.0px" width="24" height="24" viewBox="0 0 24 24"><path d="M13 11.600L23.200 3.900" stroke="#e8141c" stroke-width="1.900" stroke-linecap="round"/><path d="M10.600 6.200C11 2.800 14.800 0.600 17.400 2C18.600 4 17 6.600 14.400 7.400Z" fill="#ead01c" stroke="#5a5000" stroke-width="0.900" stroke-linejoin="round"/><path d="M15.500 2.200C17 3.500 16.500 5.800 14.600 7" fill="none" stroke="#b89c04" stroke-width="1.200"/><path d="M6.200 17.500C3 12.500 5.500 8.300 10.500 8.300C15.500 8.300 19.800 11.500 18.300 16.500" fill="none" stroke="#5a5000" stroke-width="6.400" stroke-linecap="round"/><path d="M6.200 17.500C3 12.500 5.500 8.300 10.500 8.300C15.500 8.300 19.800 11.500 18.300 16.500" fill="none" stroke="#ead01c" stroke-width="5" stroke-linecap="round"/><path d="M5.200 14.500C4.500 11.500 7 9.300 10.500 9.300" fill="none" stroke="#fff27a" stroke-width="1.500" stroke-linecap="round"/><path d="M13.500 9.600C16.500 10.600 18.600 13 18 16" fill="none" stroke="#b89c04" stroke-width="1.400" stroke-linecap="round"/><path d="M7.800 18C8.300 20.300 9.500 21.800 10.800 22.300" fill="none" stroke="#5a5000" stroke-width="4.200" stroke-linecap="round"/><path d="M7.800 18C8.300 20.300 9.500 21.800 10.800 22.300" fill="none" stroke="#ead01c" stroke-width="2.800" stroke-linecap="round"/><path d="M0.900 21.700L13 11.600" stroke="#e8141c" stroke-width="1.900" stroke-linecap="round"/></svg>
<svg class="ic" style="left:175.0px;top:80.0px" width="24" height="24" viewBox="0 0 24 24"><path d="M3 6.100l9.600-3.400l9 2.800v11.200l-7.800 4.400l-10.800-2.200z" fill="#f2d92c" stroke="#5c5200" stroke-width="0.900" stroke-linejoin="round"/><path d="M3 6.100l9.600-3.400l9 2.800l-7.800 1.700z" fill="#fff27a" stroke="#5c5200" stroke-width="0.600" stroke-linejoin="round"/><path d="M13.800 7.200l7.800-1.700v11.200l-7.800 4.400z" fill="#dcc00c" stroke="#5c5200" stroke-width="0.600" stroke-linejoin="round"/><path d="M13.800 7.200v13.900M3 19.400l10.800 1.700l8-3.900" stroke="#e8141c" stroke-width="1.400" fill="none" stroke-linejoin="round"/><circle cx="13.8" cy="7.2" r="1.600" fill="#e8141c" stroke="#8a0000" stroke-width="0.400"/><circle cx="13.8" cy="21.1" r="1.600" fill="#e8141c" stroke="#8a0000" stroke-width="0.400"/><circle cx="3.0" cy="19.4" r="1.600" fill="#e8141c" stroke="#8a0000" stroke-width="0.400"/><circle cx="21.8" cy="17.2" r="1.600" fill="#e8141c" stroke="#8a0000" stroke-width="0.400"/></svg>
<div class="dd" style="left:203.0px;top:90.0px"></div>
<div class="vsep" style="left:220.0px;top:83.0px"></div>
<svg class="ic" style="left:229.0px;top:80.0px" width="24" height="24" viewBox="0 0 24 24"><path d="M0.800 11.500l13.400-8.500l8.900 3.500v6l-12.100 9l-10.200-4z" fill="#4f86c6" stroke="#173a66" stroke-width="0.900" stroke-linejoin="round"/><path d="M0.800 11.500l13.400-8.500l8.900 3.500l-12.100 9z" fill="#8bb6e6" stroke="#173a66" stroke-width="0.700" stroke-linejoin="round"/><path d="M11 15.500v6l12.100-9v-6z" fill="#3a70b8" stroke="#173a66" stroke-width="0.700" stroke-linejoin="round"/><path d="M6.500 9.700l7.500-4.500l4.800 2l-7 4.800z" fill="#e82020" stroke="#7a0000" stroke-width="0.800" stroke-linejoin="round"/><path d="M8.800 9.700l5.200-3l2 0.800l-4.500 3.200z" fill="#a30606"/></svg>
<svg class="ic" style="left:260.0px;top:80.0px" width="24" height="24" viewBox="0 0 24 24"><path d="M2.300 1.800l6-1.300l15.100 4.400v16.600l-7.700 0.700l-13.400-3.200z" fill="#4f86c6" stroke="#173a66" stroke-width="0.900" stroke-linejoin="round"/><path d="M2.300 1.800l13.400 4.400v16l-13.400-3.200z" fill="#6a9bd6" stroke="#173a66" stroke-width="0.700" stroke-linejoin="round"/><path d="M15.700 6.200l7.700-1.300v16.600l-7.700 0.700z" fill="#3468ae" stroke="#173a66" stroke-width="0.700" stroke-linejoin="round"/><path d="M2.300 1.800l6-1.300l15.100 4.400l-7.700 1.300z" fill="#8bb6e6" stroke="#173a66" stroke-width="0.600" stroke-linejoin="round"/><ellipse cx="9.300" cy="12.200" rx="5.500" ry="7" fill="#e82020" stroke="#5a0000" stroke-width="0.900"/><path d="M11 5.800c3 1 4 4 4 6.600c0 2.800-1.500 5.800-4.500 6.600c2-1.500 3-4 3-6.600c0-2.600-0.800-5-2.500-6.600z" fill="#8a0505"/></svg>
<svg class="ic" style="left:293.0px;top:80.0px" width="24" height="24" viewBox="0 0 24 24"><path d="M1.300 19.600l21.700-15.300" stroke="#e8141c" stroke-width="1.700"/><path d="M1.900 9.500c2.500-2 5-3 8-2.600c3 3 4.500 8 3.500 14c-2 0.300-3.500 0-5-0.800c0.500-4-1.500-8-6.500-10.600z" fill="#5b8fd0" stroke="#173a66" stroke-width="0.900" stroke-linejoin="round"/><path d="M4 9c3.500 2.500 5.800 6.500 5.500 11.500M6.500 8c3.500 2.500 5.500 7 5 12.500" fill="none" stroke="#a9c8ea" stroke-width="0.800"/><path d="M10.500 6.500c2-2.500 5-3.800 8-3.300c2.500 2.500 4 6.500 3.500 11c-2.500 1-5 1.300-7.500 0.500c0-3-1.500-6-4-8.200z" fill="#e82020" stroke="#6a0000" stroke-width="0.900" stroke-linejoin="round"/><path d="M13.500 5c2.500 2.500 4 6 3.800 9.800M16.300 3.800c2.500 2.700 3.700 6.500 3.400 10.500" fill="none" stroke="#8a0505" stroke-width="0.900"/><path d="M14 10.500l9-6.300" stroke="#e8141c" stroke-width="1.700"/></svg>
<svg class="ic" style="left:325.0px;top:80.0px" width="24" height="24" viewBox="0 0 24 24"><path d="M2.800 11.600l6.500-8.100l12 3.100v14.500l-12.300-2.100h-6.200z" fill="url(#gr)" stroke="#5a0000" stroke-width="0.800" stroke-linejoin="round"/><path d="M9 11.600l12.300-5v14.500l-12.300-2.200z" fill="#000" fill-opacity="0.080"/><path d="M9.300 3.500l12 3.100v14.500" fill="none" stroke="#3f78c4" stroke-width="1.900" stroke-linejoin="round"/><rect x="2.800" y="11.600" width="6.200" height="7.400" fill="#e63030" stroke="#3f78c4" stroke-width="1.600"/><rect x="4.600" y="13.600" width="2.600" height="3.400" fill="#c40808" stroke="#3f78c4" stroke-width="0.800"/></svg>
<svg class="ic" style="left:357.0px;top:80.0px" width="24" height="24" viewBox="0 0 24 24"><path d="M1 12.800c2-3.800 4.500-7.300 6.700-10.700l9.500 3.400l5 8.900c-5.200 2.100-10.200 4.600-13.400 7.900h-7.800z" fill="url(#gr)" stroke="#5a0000" stroke-width="0.800" stroke-linejoin="round"/><path d="M11 16.500c2-2 4.500-3.500 7-4.500" fill="none" stroke="#86b2e3" stroke-width="1.300" stroke-dasharray="2 1.500"/><path d="M7.700 2.100l9.500 3.400l5 8.900" fill="none" stroke="#3f78c4" stroke-width="1.800" stroke-linejoin="round"/><rect x="1" y="12.800" width="7.800" height="9.400" fill="#e63030" stroke="#3f78c4" stroke-width="1.600"/><rect x="3.200" y="15.600" width="3.200" height="3.800" fill="#3a70b8" stroke="#3f78c4" stroke-width="0.800"/><circle cx="21.500" cy="2.900" r="1.200" fill="#3f78c4"/></svg>
<svg class="ic" style="left:389.0px;top:80.0px" width="24" height="24" viewBox="0 0 24 24"><path d="M13 11.600L23.200 3.900" stroke="#e8141c" stroke-width="1.900" stroke-linecap="round"/><path d="M10.600 6.200C11 2.800 14.800 0.600 17.400 2C18.600 4 17 6.600 14.400 7.400Z" fill="#5b8fd0" stroke="#173a66" stroke-width="0.900" stroke-linejoin="round"/><path d="M15.500 2.200C17 3.500 16.500 5.800 14.600 7" fill="none" stroke="#2f64aa" stroke-width="1.200"/><path d="M6.200 17.500C3 12.500 5.500 8.300 10.500 8.300C15.500 8.300 19.800 11.500 18.300 16.500" fill="none" stroke="#173a66" stroke-width="6.400" stroke-linecap="round"/><path d="M6.200 17.500C3 12.500 5.500 8.300 10.500 8.300C15.500 8.300 19.800 11.500 18.300 16.500" fill="none" stroke="#5b8fd0" stroke-width="5" stroke-linecap="round"/><path d="M5.200 14.500C4.500 11.500 7 9.300 10.500 9.300" fill="none" stroke="#a9c8ea" stroke-width="1.500" stroke-linecap="round"/><path d="M13.500 9.600C16.500 10.600 18.600 13 18 16" fill="none" stroke="#2f64aa" stroke-width="1.400" stroke-linecap="round"/><path d="M7.800 18C8.300 20.300 9.500 21.800 10.800 22.300" fill="none" stroke="#173a66" stroke-width="4.200" stroke-linecap="round"/><path d="M7.800 18C8.300 20.300 9.500 21.800 10.800 22.300" fill="none" stroke="#5b8fd0" stroke-width="2.800" stroke-linecap="round"/><path d="M0.900 21.700L13 11.600" stroke="#e8141c" stroke-width="1.900" stroke-linecap="round"/></svg>
<svg class="ic" style="left:421.0px;top:80.0px" width="24" height="24" viewBox="0 0 24 24"><path d="M3 6.100l9.600-3.400l9 2.800v11.200l-7.800 4.400l-10.800-2.200z" fill="#e82020" stroke="#5a0000" stroke-width="0.900" stroke-linejoin="round"/><path d="M3 6.100l9.600-3.400l9 2.800l-7.800 1.700z" fill="#f44" stroke="#5a0000" stroke-width="0.600" stroke-linejoin="round"/><path d="M13.800 7.200l7.800-1.700v11.200l-7.800 4.400z" fill="#c40808" stroke="#5a0000" stroke-width="0.600" stroke-linejoin="round"/><path d="M13.800 7.200v13.900M3 19.400l10.800 1.700l8-3.900" stroke="#3f78c4" stroke-width="1.400" fill="none" stroke-linejoin="round"/><circle cx="13.8" cy="7.2" r="1.600" fill="#6a9bd6" stroke="#173a66" stroke-width="0.400"/><circle cx="13.8" cy="21.1" r="1.600" fill="#6a9bd6" stroke="#173a66" stroke-width="0.400"/><circle cx="3.0" cy="19.4" r="1.600" fill="#6a9bd6" stroke="#173a66" stroke-width="0.400"/><circle cx="21.8" cy="17.2" r="1.600" fill="#6a9bd6" stroke="#173a66" stroke-width="0.400"/></svg>
<div class="dd" style="left:449.0px;top:90.0px"></div>
<div class="vsep" style="left:465.0px;top:83.0px"></div>
<svg class="ic" style="left:475.0px;top:80.0px" width="24" height="24" viewBox="0 0 24 24"><defs><radialGradient id="gsp1" cx="0.4" cy="0.35" r="0.7"><stop offset="0" stop-color="#8bb6e6"/><stop offset="1" stop-color="#5b8fd0"/></radialGradient><radialGradient id="gsp2" cx="0.4" cy="0.35" r="0.75"><stop offset="0" stop-color="#5b8fd0"/><stop offset="1" stop-color="#24579f"/></radialGradient></defs><circle cx="15.800" cy="9.100" r="6.600" fill="url(#gsp1)" stroke="#173a66" stroke-width="0.800"/><circle cx="8.200" cy="14.700" r="7.100" fill="url(#gsp2)" stroke="#173a66" stroke-width="0.800"/></svg>
<svg class="grip" style="left:511px;top:85px" viewBox="0 0 6 16"><rect x="0" y="0.0" width="1.2" height="1.2" fill="#5a5a5a"/><rect x="0" y="2.9" width="1.2" height="1.2" fill="#5a5a5a"/><rect x="0" y="5.8" width="1.2" height="1.2" fill="#5a5a5a"/><rect x="0" y="8.7" width="1.2" height="1.2" fill="#5a5a5a"/><rect x="0" y="11.6" width="1.2" height="1.2" fill="#5a5a5a"/><rect x="0" y="14.5" width="1.2" height="1.2" fill="#5a5a5a"/><rect x="4" y="0.0" width="1.2" height="1.2" fill="#5a5a5a"/><rect x="4" y="2.9" width="1.2" height="1.2" fill="#5a5a5a"/><rect x="4" y="5.8" width="1.2" height="1.2" fill="#5a5a5a"/><rect x="4" y="8.7" width="1.2" height="1.2" fill="#5a5a5a"/><rect x="4" y="11.6" width="1.2" height="1.2" fill="#5a5a5a"/><rect x="4" y="14.5" width="1.2" height="1.2" fill="#5a5a5a"/></svg>
<svg class="ic" style="left:520.0px;top:80.0px" width="24" height="24" viewBox="0 0 24 24"><path d="M1.100 15.200c0.300-5 2.500-8.500 6.100-10.600l5.600-2.500l10.100 4v6.100l-11.700 9.600l-10.100-3.600z" fill="#4f86c6" stroke="#173a66" stroke-width="0.900" stroke-linejoin="round"/><path d="M7.200 4.600l5.600-2.500l10.100 4l-4.600 0z" fill="#8bb6e6" stroke="#173a66" stroke-width="0.600" stroke-linejoin="round"/><path d="M18.300 6.100h4.600v6.100l-11.700 9.600v-4c0.800-5.300 3.300-9.300 7.100-11.700z" fill="#3468ae" stroke="#173a66" stroke-width="0.600" stroke-linejoin="round"/><path d="M1.600 15.200c0-4.700 1.900-8.700 5.600-10.600l11.100 1.500c-3.800 2.400-6.300 6.400-6.800 11.700z" fill="url(#gr)" stroke="#6a0000" stroke-width="0.700" stroke-linejoin="round"/><path d="M1.100 15.200l10.100 3.500v3.100l-10.100-3.600z" fill="#6a9bd6" stroke="#173a66" stroke-width="0.600" stroke-linejoin="round"/></svg>
<svg class="ic" style="left:552.0px;top:80.0px" width="24" height="24" viewBox="0 0 24 24"><path d="M1 15.200l8.100-11.100l4-1.800l9.600 3.300v6.600l-11.100 9.600l-10.600-4.100z" fill="#4f86c6" stroke="#173a66" stroke-width="0.900" stroke-linejoin="round"/><path d="M9.100 4.100l4-1.800l9.600 3.300l-3.500 0.500z" fill="#8bb6e6" stroke="#173a66" stroke-width="0.600" stroke-linejoin="round"/><path d="M19.200 6.100l3.500-0.500v6.600l-11.100 9.600v-3.600z" fill="#3468ae" stroke="#173a66" stroke-width="0.600" stroke-linejoin="round"/><path d="M1.500 14.700l7.600-10.600l10.100 2l-7.600 12.100z" fill="url(#gr)" stroke="#6a0000" stroke-width="0.700" stroke-linejoin="round"/><path d="M1 15.200l10.600 3.500v3.100l-10.600-4.100z" fill="#6a9bd6" stroke="#173a66" stroke-width="0.600" stroke-linejoin="round"/></svg>
<svg class="ic" style="left:584.0px;top:80.0px" width="24" height="24" viewBox="0 0 24 24"><path d="M1.300 5.600l9.100-4.500l12.200 4l-0.500 12.100l-9.600 5.300l-10.600-4.800z" fill="#6a9bd6" stroke="#173a66" stroke-width="0.900" stroke-linejoin="round"/><path d="M1.300 5.600l9.100-4.500l12.200 4l-10.100 4z" fill="#8bb6e6" stroke="#173a66" stroke-width="0.600" stroke-linejoin="round"/><path d="M5.400 6.600l14.600-0.500l-7.500 2.500z" fill="#e82020"/><path d="M4.400 8.100l7.100 2.100v10.100l-5.600-3.600z" fill="#e82020" stroke="#6a0000" stroke-width="0.600" stroke-linejoin="round"/><path d="M13.500 10.200l7.600-3.100l-0.500 9.100l-7.100 4.100z" fill="#d41212" stroke="#6a0000" stroke-width="0.600" stroke-linejoin="round"/><path d="M12.500 9.100v13.400" stroke="#173a66" stroke-width="0.700"/></svg>
<svg class="ic" style="left:616.0px;top:80.0px" width="24" height="24" viewBox="0 0 24 24"><path d="M4.200 4.600l7.600-3.500l11.100 4l-0.500 11.100l-8.600 6.300l-12.100-3.800z" fill="#5b8fd0" stroke="#173a66" stroke-width="0.900" stroke-linejoin="round"/><path d="M4.200 4.600l7.600-3.500l11.100 4l-3 1l-8.600-2.500l-4.500 3z" fill="#8bb6e6" stroke="#173a66" stroke-width="0.500" stroke-linejoin="round"/><path d="M6.800 6.600l4.500-3v10.600l-5 2.500z" fill="#c40808" stroke="#6a0000" stroke-width="0.500" stroke-linejoin="round"/><path d="M11.300 3.600l8.600 2.500l-0.500 8.100h-8.100z" fill="#e82020" stroke="#6a0000" stroke-width="0.500" stroke-linejoin="round"/><path d="M11.300 14.200h8.100l-5.600 4.500l-7.500-2z" fill="#f23a3a" stroke="#6a0000" stroke-width="0.500" stroke-linejoin="round"/></svg>
<div class="hdr" style="left:1px;top:111px;width:310px;height:18px"><span style="position:absolute;left:112px;top:1px">模型</span></div>
<div class="abs" style="left:1px;top:129px;width:310px;height:1102px;background:#333"></div>
<div class="tree" style="left:2px;top:129px;width:303px;height:523px"></div>
<div class="tree" style="left:2px;top:661px;width:303px;height:570px"></div>
<svg class="abs" style="left:246px;top:113px" width="58" height="14" viewBox="0 0 58 14"><rect x="1.700" y="2.700" width="8.800" height="8.800" fill="#333" stroke="#2a2a2a" stroke-width="1"/><rect x="2.300" y="3.700" width="7.600" height="1.900" fill="#5e5e5e"/><rect x="0.600" y="1.600" width="11" height="11" fill="none" stroke="#858585" stroke-width="1.100"/><path d="M25.900 4.600V1.600h8v8h-3.300" fill="none" stroke="#858585" stroke-width="1.100"/><path d="M27 4.600V2.700h5.800v5.800h-2.200" fill="none" stroke="#2a2a2a" stroke-width="1"/><rect x="22.600" y="4.600" width="8" height="8" fill="#383838" stroke="#858585" stroke-width="1.100"/><path d="M30.600 5.600v7h-7" fill="none" stroke="#5c5c5c" stroke-width="1.100"/><path d="M45.500 2.500l10 10M55.500 2.500l-10 10" stroke="#5e5e5e" stroke-width="2.300" fill="none" stroke-linecap="round"/><path d="M45.500 2.500l10 10M55.500 2.500l-10 10" stroke="#4a4a4a" stroke-width="0.700" fill="none"/></svg>
<div class="hdr" style="left:1468px;top:111px;width:411px;height:18px"><span style="position:absolute;left:171px;top:1px">任务</span></div>
<div class="abs" style="left:1468px;top:129px;width:6px;height:1102px;background:#333"></div>
<div class="abs" style="left:1474px;top:129px;width:405px;height:1102px;background:#393939"></div>
<svg class="abs" style="left:1826px;top:113px" width="58" height="14" viewBox="0 0 58 14"><rect x="1.700" y="2.700" width="8.800" height="8.800" fill="#333" stroke="#2a2a2a" stroke-width="1"/><rect x="2.300" y="3.700" width="7.600" height="1.900" fill="#5e5e5e"/><rect x="0.600" y="1.600" width="11" height="11" fill="none" stroke="#858585" stroke-width="1.100"/><path d="M25.900 4.600V1.600h8v8h-3.300" fill="none" stroke="#858585" stroke-width="1.100"/><path d="M27 4.600V2.700h5.800v5.800h-2.200" fill="none" stroke="#2a2a2a" stroke-width="1"/><rect x="22.600" y="4.600" width="8" height="8" fill="#383838" stroke="#858585" stroke-width="1.100"/><path d="M30.600 5.600v7h-7" fill="none" stroke="#5c5c5c" stroke-width="1.100"/><path d="M45.500 2.500l10 10M55.500 2.500l-10 10" stroke="#5e5e5e" stroke-width="2.300" fill="none" stroke-linecap="round"/><path d="M45.500 2.500l10 10M55.500 2.500l-10 10" stroke="#4a4a4a" stroke-width="0.700" fill="none"/></svg>
<div class="abs" style="left:1482px;top:137px;width:395px;height:65px;border:1px solid #000;border-radius:4px;background:#171b27;overflow:hidden"><div style="height:27px;background:linear-gradient(90deg,#000 0%,#0a0b10 40%,#191e2c 100%)"></div></div>
<svg class="ic" style="left:1488.0px;top:143.0px" width="16" height="16" viewBox="0 0 24 24"><path d="M3 5.500l10-3l8 2.500v13l-9 4l-9-3.500z" fill="#4f86c6" stroke="#173a66" stroke-width="0.900" stroke-linejoin="round"/><path d="M3 5.500l10-3l8 2.500l-9 3.500z" fill="#86b2e3" stroke="#173a66" stroke-width="0.600"/><path d="M12 8.500v13.500" stroke="#e01b1b" stroke-width="2"/><path d="M1.500 20.500l10.500 2l10-3" stroke="#e01b1b" stroke-width="1.800" fill="none"/><circle cx="12" cy="7.500" r="1.800" fill="#e01b1b"/><circle cx="2" cy="20.500" r="1.800" fill="#e01b1b"/><circle cx="12" cy="22" r="1.800" fill="#e01b1b"/><circle cx="22" cy="19.500" r="1.800" fill="#e01b1b"/></svg>
<div class="abs" style="left:1506px;top:144px;font-size:10.5px;line-height:14px;font-weight:bold;color:#fff;letter-spacing:0.25px">Start Part</div>
<svg class="abs" style="left:1850px;top:142px" width="18" height="18" viewBox="0 0 18 18"><circle cx="9" cy="9" r="7.6" fill="none" stroke="#6f727a" stroke-width="1.1"/><path d="M5.6 8.6L9 5.6l3.4 3M5.6 12.4L9 9.4l3.4 3" fill="none" stroke="#a9abb0" stroke-width="1.2"/></svg>
<svg class="ic" style="left:1491.0px;top:176.0px" width="14" height="14" viewBox="0 0 24 24"><path d="M2.800 9L10.800 2.300L15.600 4.400L15.600 9.600L20.200 11.700L20.200 17.100L12.700 22.800L3.100 18.200Z" fill="#5b8fd0" stroke="#173a66" stroke-width="1.300" stroke-linejoin="round"/><path d="M2.800 9L10.800 2.300L15.600 4.400L8 10.900Z" fill="#86b2e3" stroke="#173a66" stroke-width="0.600" stroke-linejoin="round"/><path d="M8 10.900L15.600 4.400L15.600 9.600L8.500 15.500Z" fill="#2f64aa" stroke="#173a66" stroke-width="0.600" stroke-linejoin="round"/><path d="M8.500 15.500L15.600 9.600L20.200 11.700L12.700 17.800Z" fill="#86b2e3" stroke="#173a66" stroke-width="0.600" stroke-linejoin="round"/><path d="M12.700 17.800L20.200 11.700L20.200 17.100L12.700 22.800Z" fill="#2f64aa" stroke="#173a66" stroke-width="0.600" stroke-linejoin="round"/><path d="M8 10.900L8.500 15.500L12.700 17.800" fill="none" stroke="#173a66" stroke-width="0.600"/></svg>
<div class="abs" style="left:1509px;top:176px;font-size:9.6px;line-height:14px;font-weight:bold;color:#f4f4f4">创建实体</div>
<svg class="abs" style="left:7px;top:135px" width="10" height="6" viewBox="0 0 10 6"><path d="M0.300 0.500h9.400L5 5.300z" fill="#ededed"/></svg>
<svg class="ic" style="left:25.0px;top:131.0px" width="14" height="14" viewBox="0 0 24 24"><path d="M3 1h13l5 5v17h-18z" fill="#f0f0ee" stroke="#b9bab6" stroke-width="0.800"/><path d="M5 12l5-2.500l5 2.500v7l-5 3l-5-3z" fill="#3f78c4" stroke="#173a66" stroke-width="0.800"/><path d="M5 12l5-2.500l5 2.500l-5 2.500z" fill="#86b2e3"/><circle cx="14.500" cy="8.500" r="4.500" fill="#e01b1b"/></svg>
<div class="row b" style="left:46px;top:130px">未命名</div>
<div class="hl" style="left:41px;top:148px;width:90px"></div>
<svg class="abs" style="left:27px;top:154px" width="10" height="6" viewBox="0 0 10 6"><path d="M0.300 0.500h9.400L5 5.300z" fill="#ededed"/></svg>
<svg class="abs" style="left:47px;top:153px" width="12" height="8" viewBox="0 0 12 8"><path d="M0.500 4C2.200 1.600 4 1 6 1S9.800 1.600 11.500 4C9.800 6.400 8 7 6 7S2.200 6.400 0.500 4z" fill="#f6f6f6"/><ellipse cx="6" cy="4" rx="2.600" ry="2.100" fill="#1c1c1c"/><circle cx="6.300" cy="4" r="0.800" fill="#f0f0f0"/></svg>
<svg class="ic" style="left:67.0px;top:149.0px" width="14" height="14" viewBox="0 0 24 24"><path d="M2.800 9L10.800 2.300L15.600 4.400L15.600 9.600L20.200 11.700L20.200 17.100L12.700 22.800L3.100 18.200Z" fill="#ecd21c" stroke="#5c5200" stroke-width="1.300" stroke-linejoin="round"/><path d="M2.800 9L10.800 2.300L15.600 4.400L8 10.900Z" fill="#fff27a" stroke="#5c5200" stroke-width="0.600" stroke-linejoin="round"/><path d="M8 10.900L15.600 4.400L15.600 9.600L8.500 15.500Z" fill="#d8bc0c" stroke="#5c5200" stroke-width="0.600" stroke-linejoin="round"/><path d="M8.500 15.500L15.600 9.600L20.200 11.700L12.700 17.800Z" fill="#fff27a" stroke="#5c5200" stroke-width="0.600" stroke-linejoin="round"/><path d="M12.700 17.800L20.200 11.700L20.200 17.100L12.700 22.800Z" fill="#d8bc0c" stroke="#5c5200" stroke-width="0.600" stroke-linejoin="round"/><path d="M8 10.900L8.500 15.500L12.700 17.800" fill="none" stroke="#5c5200" stroke-width="0.600"/></svg>
<div class="row b" style="left:88px;top:148px">Part</div>
<svg class="abs" style="left:48px;top:170px" width="6" height="10" viewBox="0 0 6 10"><path d="M0.500 0.800v8.400L5.300 5z" fill="#ededed"/></svg>
<svg class="abs" style="left:65px;top:169px" width="14" height="12" viewBox="0 0 14 12"><path d="M1.3 6C3 3 5 2.3 7 2.3S11 3 12.7 6C11 9 9 9.7 7 9.7S3 9 1.3 6z" fill="#8a8a8a"/><circle cx="7" cy="6" r="2.2" fill="#333"/><path d="M1 1l12 10M3 0.5l11 9.5" stroke="#9a9a9a" stroke-width="1" /></svg>
<svg class="ic" style="left:87.0px;top:167.0px" width="14" height="14" viewBox="0 0 24 24"><path d="M10.500 1.500v11.500l-8.500 9M10.500 13l12 2" fill="none" stroke="#8c8c8c" stroke-width="2"/></svg>
<div class="row g" style="left:108px;top:166px">原点</div>
<div class="hl" style="left:61px;top:184px;width:94px"></div>
<svg class="abs" style="left:47px;top:190px" width="10" height="6" viewBox="0 0 10 6"><path d="M0.300 0.500h9.400L5 5.300z" fill="#ededed"/></svg>
<svg class="abs" style="left:67px;top:189px" width="12" height="8" viewBox="0 0 12 8"><path d="M0.500 4C2.200 1.600 4 1 6 1S9.800 1.600 11.500 4C9.800 6.400 8 7 6 7S2.200 6.400 0.500 4z" fill="#f6f6f6"/><ellipse cx="6" cy="4" rx="2.600" ry="2.100" fill="#1c1c1c"/><circle cx="6.300" cy="4" r="0.800" fill="#f0f0f0"/></svg>
<svg class="ic" style="left:87.0px;top:185.0px" width="14" height="14" viewBox="0 0 24 24"><path d="M2.800 9L10.800 2.300L15.600 4.400L15.600 9.600L20.200 11.700L20.200 17.100L12.700 22.800L3.100 18.200Z" fill="#5b8fd0" stroke="#173a66" stroke-width="1.300" stroke-linejoin="round"/><path d="M2.800 9L10.800 2.300L15.600 4.400L8 10.900Z" fill="#86b2e3" stroke="#173a66" stroke-width="0.600" stroke-linejoin="round"/><path d="M8 10.900L15.600 4.400L15.600 9.600L8.500 15.500Z" fill="#2f64aa" stroke="#173a66" stroke-width="0.600" stroke-linejoin="round"/><path d="M8.500 15.500L15.600 9.600L20.200 11.700L12.700 17.800Z" fill="#86b2e3" stroke="#173a66" stroke-width="0.600" stroke-linejoin="round"/><path d="M12.700 17.800L20.200 11.700L20.200 17.100L12.700 22.800Z" fill="#2f64aa" stroke="#173a66" stroke-width="0.600" stroke-linejoin="round"/><path d="M8 10.900L8.500 15.500L12.700 17.800" fill="none" stroke="#173a66" stroke-width="0.600"/></svg>
<div class="row b" style="left:108px;top:184px">Body</div>
<svg class="abs" style="left:68px;top:206px" width="6" height="10" viewBox="0 0 6 10"><path d="M0.500 0.800v8.400L5.300 5z" fill="#ededed"/></svg>
<svg class="abs" style="left:85px;top:205px" width="14" height="12" viewBox="0 0 14 12"><path d="M1.3 6C3 3 5 2.3 7 2.3S11 3 12.7 6C11 9 9 9.7 7 9.7S3 9 1.3 6z" fill="#8a8a8a"/><circle cx="7" cy="6" r="2.2" fill="#333"/><path d="M1 1l12 10M3 0.5l11 9.5" stroke="#9a9a9a" stroke-width="1" /></svg>
<svg class="ic" style="left:107.0px;top:203.0px" width="14" height="14" viewBox="0 0 24 24"><path d="M10.500 1.500v11.500l-8.500 9M10.500 13l12 2" fill="none" stroke="#8c8c8c" stroke-width="2"/></svg>
<div class="row g" style="left:128px;top:202px">原点001</div>
<svg class="abs" style="left:68px;top:224px" width="6" height="10" viewBox="0 0 6 10"><path d="M0.500 0.800v8.400L5.300 5z" fill="#ededed"/></svg>
<svg class="abs" style="left:85px;top:223px" width="14" height="12" viewBox="0 0 14 12"><path d="M1.3 6C3 3 5 2.3 7 2.3S11 3 12.7 6C11 9 9 9.7 7 9.7S3 9 1.3 6z" fill="#8a8a8a"/><circle cx="7" cy="6" r="2.2" fill="#333"/><path d="M1 1l12 10M3 0.5l11 9.5" stroke="#9a9a9a" stroke-width="1" /></svg>
<svg class="ic" style="left:107.0px;top:221.0px" width="14" height="14" viewBox="0 0 24 24"><path d="M2 17.500l9-3.500l11 3.500l-9.500 4.500z" fill="none" stroke="#777" stroke-width="1.400"/><path d="M2 7l9.500-4l10.500 3.500v6.500l-9.500 4.500l-10.500-4z" fill="#9a9a9a" stroke="#555" stroke-width="0.900" stroke-linejoin="round"/><path d="M2 7l9.500-4l10.500 3.500l-9.500 4.500z" fill="#cfcfcf" stroke="#555" stroke-width="0.700"/></svg>
<div class="row g" style="left:128px;top:220px">Pad</div>
<svg class="abs" style="left:68px;top:242px" width="6" height="10" viewBox="0 0 6 10"><path d="M0.500 0.800v8.400L5.300 5z" fill="#ededed"/></svg>
<svg class="abs" style="left:87px;top:243px" width="12" height="8" viewBox="0 0 12 8"><path d="M0.500 4C2.200 1.600 4 1 6 1S9.800 1.600 11.500 4C9.800 6.400 8 7 6 7S2.200 6.400 0.500 4z" fill="#f6f6f6"/><ellipse cx="6" cy="4" rx="2.600" ry="2.100" fill="#1c1c1c"/><circle cx="6.300" cy="4" r="0.800" fill="#f0f0f0"/></svg>
<svg class="ic" style="left:107.0px;top:238.0px" width="16" height="16" viewBox="0 0 24 24"><g transform="scale(0.86)"><path d="M0.800 11.500l13.400-8.500l8.900 3.500v6l-12.100 9l-10.200-4z" fill="#4f86c6" stroke="#173a66" stroke-width="0.900" stroke-linejoin="round"/><path d="M0.800 11.500l13.400-8.500l8.900 3.500l-12.100 9z" fill="#8bb6e6" stroke="#173a66" stroke-width="0.700" stroke-linejoin="round"/><path d="M11 15.500v6l12.100-9v-6z" fill="#3a70b8" stroke="#173a66" stroke-width="0.700" stroke-linejoin="round"/><path d="M6.500 9.700l7.500-4.500l4.800 2l-7 4.800z" fill="#e82020" stroke="#7a0000" stroke-width="0.800" stroke-linejoin="round"/><path d="M8.800 9.700l5.200-3l2 0.800l-4.500 3.200z" fill="#a30606"/></g><path d="M12 1.500l2.500 2.500l5-4.500" stroke="#9fc3e8" stroke-width="2" fill="none"/><circle cx="16" cy="16.500" r="6.500" fill="#3fae13" stroke="#e9f5e2" stroke-width="0.800"/><path d="M16 12v6M13 16l3 3.500l3-3.500" stroke="#fff" stroke-width="2" fill="none"/></svg>
<div class="row w" style="left:128px;top:238px">Pocket</div>
<svg class="abs" style="left:311px;top:111px" width="1157" height="1120" viewBox="311 111 1157 1120"><rect x="311" y="111" width="1157" height="1120" fill="#3c3c3c"/>
<linearGradient id="rimg" gradientUnits="userSpaceOnUse" x1="790.2" y1="-460.2" x2="139.2" y2="-81.1"><stop offset="0.000" stop-color="#242629"/><stop offset="0.025" stop-color="#323438"/><stop offset="0.050" stop-color="#373a3d"/><stop offset="0.075" stop-color="#3b3e41"/><stop offset="0.100" stop-color="#3e4145"/><stop offset="0.125" stop-color="#414347"/><stop offset="0.150" stop-color="#43464a"/><stop offset="0.175" stop-color="#45484b"/><stop offset="0.200" stop-color="#47494d"/><stop offset="0.225" stop-color="#484b4f"/><stop offset="0.250" stop-color="#494c50"/><stop offset="0.275" stop-color="#4a4d51"/><stop offset="0.300" stop-color="#4b4e52"/><stop offset="0.325" stop-color="#4c4f53"/><stop offset="0.350" stop-color="#4d5054"/><stop offset="0.375" stop-color="#4d5055"/><stop offset="0.400" stop-color="#4e5155"/><stop offset="0.425" stop-color="#4e5155"/><stop offset="0.450" stop-color="#4e5256"/><stop offset="0.475" stop-color="#4f5256"/><stop offset="0.500" stop-color="#4f5256"/><stop offset="0.525" stop-color="#4e5256"/><stop offset="0.550" stop-color="#4e5155"/><stop offset="0.575" stop-color="#4e5155"/><stop offset="0.600" stop-color="#4e5155"/><stop offset="0.625" stop-color="#4d5054"/><stop offset="0.650" stop-color="#4c4f53"/><stop offset="0.675" stop-color="#4c4f53"/><stop offset="0.700" stop-color="#4a4d51"/><stop offset="0.725" stop-color="#494c50"/><stop offset="0.750" stop-color="#484b4f"/><stop offset="0.775" stop-color="#474a4e"/><stop offset="0.800" stop-color="#45484c"/><stop offset="0.825" stop-color="#44474a"/><stop offset="0.850" stop-color="#424448"/><stop offset="0.875" stop-color="#3f4245"/><stop offset="0.900" stop-color="#3d3f43"/><stop offset="0.925" stop-color="#393c40"/><stop offset="0.950" stop-color="#35383b"/><stop offset="0.975" stop-color="#303235"/><stop offset="1.000" stop-color="#242629"/></linearGradient>
<polygon points="1316.9,444.9 1319.9,449.5 1322.7,454.2 1325.5,458.9 1328.1,463.7 1330.7,468.6 1333.1,473.5 1335.5,478.4 1337.7,483.5 1339.9,488.5 1341.9,493.6 1343.9,498.8 1345.7,504.0 1347.4,509.2 1349.0,514.5 1350.6,519.9 1352.0,525.2 1353.3,530.6 1354.5,536.1 1355.5,541.6 1356.5,547.1 1357.4,552.6 1358.1,558.2 1358.8,563.8 1358.8,563.8 1359.3,569.4 1359.8,575.0 1360.1,580.7 1360.3,586.4 1360.4,592.1 1360.4,597.8 1360.3,603.6 1360.0,609.3 1359.7,615.1 1359.2,620.8 1358.7,626.6 1358.0,632.4 1357.2,638.2 1356.3,644.0 1355.4,649.8 1354.2,655.6 1353.0,661.4 1351.7,667.2 1350.3,673.0 1348.8,678.7 1347.1,684.5 1345.4,690.3 1343.5,696.0 1341.6,701.7 1339.5,707.4 1337.3,713.1 1335.1,718.8 1332.7,724.5 1330.2,730.1 1327.7,735.7 1325.0,741.3 1322.2,746.8 1319.4,752.3 1316.4,757.8 1313.3,763.3 1310.2,768.7 1306.9,774.1 1303.6,779.4 1300.1,784.7 1296.6,790.0 1293.0,795.2 1289.3,800.3 1285.5,805.5 1281.6,810.5 1277.6,815.6 1273.6,820.5 1269.4,825.5 1265.2,830.3 1260.9,835.2 1256.5,839.9 1252.1,844.6 1247.5,849.2 1242.9,853.8 1238.2,858.3 1233.5,862.8 1228.6,867.2 1223.7,871.5 1218.8,875.7 1213.7,879.9 1208.6,884.0 1203.5,888.1 1198.2,892.0 1193.0,895.9 1187.6,899.7 1182.2,903.5 1176.7,907.1 1171.2,910.7 1165.7,914.2 1160.0,917.6 1154.4,920.9 1148.7,924.2 1142.9,927.4 1137.1,930.4 1131.3,933.4 1125.4,936.4 1119.5,939.2 1113.5,941.9 1107.5,944.6 1101.5,947.1 1095.4,949.6 1089.3,951.9 1083.2,954.2 1077.1,956.4 1070.9,958.5 1064.7,960.5 1058.5,962.4 1052.3,964.2 1046.1,965.9 1039.8,967.5 1033.6,969.0 1027.3,970.4 1021.0,971.8 1014.7,973.0 1008.4,974.1 1002.1,975.1 995.8,976.0 989.5,976.9 983.2,977.6 976.9,978.2 970.7,978.7 964.4,979.1 958.1,979.4 951.9,979.7 945.6,979.8 939.4,979.8 933.2,979.7 927.0,979.5 920.9,979.2 914.7,978.8 908.6,978.3 902.6,977.7 896.5,977.1 890.5,976.3 884.5,975.4 878.5,974.4 872.6,973.3 866.8,972.1 860.9,970.8 855.1,969.4 849.4,967.9 843.7,966.3 838.0,964.7 832.4,962.9 826.9,961.0 821.3,959.0 815.9,957.0 810.5,954.8 805.2,952.6 799.9,950.2 794.7,947.8 789.5,945.2 784.4,942.6 779.4,939.9 774.5,937.1 769.6,934.2 764.7,931.3 760.0,928.2 755.3,925.0 750.7,921.8 746.2,918.5 741.8,915.1 737.4,911.6 733.1,908.1 728.9,904.4 724.8,900.7 720.7,896.9 716.8,893.1 712.9,889.1 709.1,885.1 705.4,881.0 701.8,876.8 698.3,872.6 694.9,868.3 691.6,864.0 688.3,859.5 685.2,855.0 682.1,850.5 679.2,845.8 676.3,841.2 673.6,836.4 684.2,854.6 686.9,859.4 689.8,864.0 692.7,868.7 695.8,873.2 698.9,877.7 702.2,882.2 705.5,886.5 708.9,890.8 712.4,895.0 716.0,899.2 719.7,903.3 723.5,907.3 727.4,911.3 731.3,915.1 735.4,918.9 739.5,922.6 743.7,926.3 748.0,929.8 752.4,933.3 756.8,936.7 761.3,940.0 765.9,943.2 770.6,946.4 775.3,949.5 780.2,952.4 785.1,955.3 790.0,958.1 795.0,960.8 800.1,963.4 805.3,966.0 810.5,968.4 815.8,970.8 821.1,973.0 826.5,975.2 831.9,977.2 837.5,979.2 843.0,981.1 848.6,982.9 854.3,984.5 860.0,986.1 865.7,987.6 871.5,989.0 877.4,990.3 883.2,991.5 889.1,992.6 895.1,993.6 901.1,994.5 907.1,995.3 913.2,995.9 919.2,996.5 925.3,997.0 931.5,997.4 937.6,997.7 943.8,997.9 950.0,998.0 956.2,998.0 962.5,997.9 968.7,997.6 975.0,997.3 981.3,996.9 987.5,996.4 993.8,995.8 1000.1,995.1 1006.4,994.2 1012.7,993.3 1019.0,992.3 1025.3,991.2 1031.6,990.0 1037.9,988.6 1044.2,987.2 1050.4,985.7 1056.7,984.1 1062.9,982.4 1069.1,980.6 1075.3,978.7 1081.5,976.7 1087.7,974.6 1093.8,972.4 1099.9,970.1 1106.0,967.8 1112.1,965.3 1118.1,962.8 1124.1,960.1 1130.1,957.4 1136.0,954.6 1141.9,951.6 1147.7,948.6 1153.5,945.6 1159.3,942.4 1165.0,939.1 1170.6,935.8 1176.3,932.4 1181.8,928.9 1187.3,925.3 1192.8,921.7 1198.2,917.9 1203.6,914.1 1208.8,910.2 1214.1,906.3 1219.2,902.2 1224.3,898.1 1229.4,893.9 1234.3,889.7 1239.2,885.4 1244.1,881.0 1248.8,876.5 1253.5,872.0 1258.1,867.4 1262.7,862.8 1267.1,858.1 1271.5,853.4 1275.8,848.5 1280.0,843.7 1284.2,838.7 1288.2,833.8 1292.2,828.7 1296.1,823.7 1299.9,818.5 1303.6,813.4 1307.2,808.2 1310.7,802.9 1314.2,797.6 1317.5,792.3 1320.8,786.9 1323.9,781.5 1327.0,776.0 1330.0,770.5 1332.8,765.0 1335.6,759.5 1338.3,753.9 1340.8,748.3 1343.3,742.7 1345.7,737.0 1347.9,731.3 1350.1,725.6 1352.2,719.9 1354.1,714.2 1356.0,708.5 1357.7,702.7 1359.4,696.9 1360.9,691.2 1362.3,685.4 1363.6,679.6 1364.8,673.8 1366.0,668.0 1366.9,662.2 1367.8,656.4 1368.6,650.6 1369.3,644.8 1369.8,639.0 1370.3,633.3 1370.6,627.5 1370.9,621.8 1371.0,616.0 1371.0,610.3 1370.9,604.6 1370.7,598.9 1370.4,593.2 1369.9,587.6 1369.4,582.0 1369.4,582.0 1368.7,576.4 1368.0,570.8 1367.1,565.3 1366.1,559.8 1365.1,554.3 1363.9,548.8 1362.6,543.4 1361.2,538.1 1359.6,532.7 1358.0,527.4 1356.3,522.2 1354.5,517.0 1352.5,511.8 1350.5,506.7 1348.3,501.7 1346.1,496.6 1343.7,491.7 1341.3,486.8 1338.7,481.9 1336.1,477.1 1333.3,472.4 1330.5,467.7 1327.5,463.1" fill="url(#rimg)"/>
<clipPath id="notop"><path clip-rule="evenodd" d="M300 100H1500V1250H300Z M1358.8 563.8 L1359.6 572.2 L1360.1 580.7 L1360.3 589.2 L1360.4 597.8 L1360.2 606.4 L1359.7 615.1 L1359.0 623.7 L1358.0 632.4 L1356.8 641.1 L1355.4 649.8 L1353.7 658.5 L1351.7 667.2 L1349.5 675.8 L1347.1 684.5 L1344.5 693.1 L1341.6 701.7 L1338.4 710.3 L1335.1 718.8 L1331.5 727.3 L1327.7 735.7 L1323.6 744.0 L1319.4 752.3 L1314.9 760.5 L1310.2 768.7 L1305.3 776.7 L1300.1 784.7 L1294.8 792.6 L1289.3 800.3 L1283.6 808.0 L1277.6 815.6 L1271.5 823.0 L1265.2 830.3 L1258.7 837.5 L1252.1 844.6 L1245.2 851.5 L1238.2 858.3 L1231.1 865.0 L1223.7 871.5 L1216.3 877.8 L1208.6 884.0 L1200.9 890.0 L1193.0 895.9 L1184.9 901.6 L1176.7 907.1 L1168.5 912.5 L1160.0 917.6 L1151.5 922.6 L1142.9 927.4 L1134.2 932.0 L1125.4 936.4 L1116.5 940.6 L1107.5 944.6 L1098.5 948.3 L1089.3 951.9 L1080.2 955.3 L1070.9 958.5 L1061.6 961.4 L1052.3 964.2 L1043.0 966.7 L1033.6 969.0 L1024.1 971.1 L1014.7 973.0 L1005.3 974.6 L995.8 976.0 L986.4 977.2 L976.9 978.2 L967.5 978.9 L958.1 979.4 L948.8 979.7 L939.4 979.8 L930.1 979.6 L920.9 979.2 L911.7 978.6 L902.6 977.7 L893.5 976.7 L884.5 975.4 L875.6 973.8 L866.8 972.1 L858.0 970.1 L849.4 967.9 L840.8 965.5 L832.4 962.9 L824.1 960.0 L815.9 957.0 L807.8 953.7 L799.9 950.2 L792.1 946.5 L784.4 942.6 L776.9 938.5 L769.6 934.2 L762.4 929.7 L755.3 925.0 L748.5 920.2 L741.8 915.1 L735.2 909.9 L728.9 904.4 L722.7 898.8 L716.8 893.1 L711.0 887.1 L705.4 881.0 L700.0 874.7 L694.9 868.3 L689.9 861.7 L685.2 855.0 L680.6 848.2 L676.3 841.2 L672.2 834.0 L668.4 826.8 L664.7 819.4 L661.3 811.9 L658.1 804.3 L655.2 796.6 L652.5 788.7 L650.0 780.8 L647.8 772.8 L645.8 764.7 L644.1 756.5 L642.5 748.3 L641.3 740.0 L640.3 731.6 L639.5 723.1 L639.0 714.6 L638.7 706.1 L638.7 697.5 L638.9 688.9 L639.4 680.3 L640.1 671.6 L641.0 662.9 L642.3 654.2 L643.7 645.5 L645.4 636.9 L647.3 628.2 L649.5 619.5 L651.9 610.8 L654.6 602.2 L657.5 593.6 L660.6 585.1 L664.0 576.5 L667.6 568.1 L671.4 559.7 L675.4 551.3 L679.7 543.0 L684.2 534.8 L688.9 526.7 L693.8 518.6 L698.9 510.6 L704.2 502.8 L709.8 495.0 L715.5 487.3 L721.4 479.8 L727.5 472.3 L733.9 465.0 L740.3 457.8 L747.0 450.7 L753.8 443.8 L760.8 437.0 L768.0 430.4 L775.3 423.9 L782.8 417.5 L790.4 411.3 L798.2 405.3 L806.1 399.4 L814.1 393.7 L822.3 388.2 L830.6 382.9 L839.0 377.7 L847.5 372.8 L856.1 368.0 L864.9 363.4 L873.7 359.0 L882.6 354.8 L891.5 350.8 L900.6 347.0 L909.7 343.4 L918.9 340.0 L928.1 336.8 L937.4 333.9 L946.7 331.2 L956.1 328.6 L965.5 326.3 L974.9 324.2 L984.3 322.4 L993.8 320.7 L1003.2 319.3 L1012.7 318.1 L1022.1 317.1 L1031.5 316.4 L1040.9 315.9 L1050.3 315.6 L1059.6 315.6 L1068.9 315.7 L1078.2 316.1 L1087.4 316.7 L1096.5 317.6 L1105.6 318.7 L1114.6 320.0 L1123.5 321.5 L1132.3 323.3 L1141.0 325.2 L1149.7 327.4 L1158.2 329.8 L1166.7 332.5 L1175.0 335.3 L1183.2 338.4 L1191.2 341.6 L1199.2 345.1 L1207.0 348.8 L1214.6 352.7 L1222.1 356.8 L1229.5 361.1 L1236.7 365.6 L1243.7 370.3 L1250.6 375.2 L1257.3 380.2 L1263.8 385.5 L1270.2 390.9 L1276.3 396.5 L1282.3 402.3 L1288.1 408.2 L1293.6 414.3 L1299.0 420.6 L1304.2 427.0 L1309.1 433.6 L1313.9 440.3 L1318.4 447.2 L1322.7 454.2 L1326.8 461.3 L1330.7 468.6 L1334.3 476.0 L1337.7 483.5 L1340.9 491.1 L1343.9 498.8 L1346.6 506.6 L1349.0 514.5 L1351.3 522.5 L1353.3 530.6 L1355.0 538.8 L1356.5 547.1 L1357.8 555.4 Z"/></clipPath>
<polygon points="1369.4,582.0 1370.2,590.4 1370.7,598.9 1370.9,607.4 1371.0,616.0 1370.8,624.6 1370.3,633.3 1369.6,641.9 1368.6,650.6 1367.4,659.3 1366.0,668.0 1364.3,676.7 1362.3,685.4 1360.1,694.0 1357.7,702.7 1355.1,711.3 1352.2,719.9 1349.0,728.5 1345.7,737.0 1342.1,745.5 1338.3,753.9 1334.2,762.2 1330.0,770.5 1325.5,778.7 1320.8,786.9 1315.9,794.9 1310.7,802.9 1305.4,810.8 1299.9,818.5 1294.2,826.2 1288.2,833.8 1282.1,841.2 1275.8,848.5 1269.3,855.7 1262.7,862.8 1255.8,869.7 1248.8,876.5 1241.7,883.2 1234.3,889.7 1226.9,896.0 1219.2,902.2 1211.5,908.2 1203.6,914.1 1195.5,919.8 1187.3,925.3 1179.1,930.7 1170.6,935.8 1162.1,940.8 1153.5,945.6 1144.8,950.2 1136.0,954.6 1127.1,958.8 1118.1,962.8 1109.1,966.5 1099.9,970.1 1090.8,973.5 1081.5,976.7 1072.2,979.6 1062.9,982.4 1053.6,984.9 1044.2,987.2 1034.7,989.3 1025.3,991.2 1015.9,992.8 1006.4,994.2 997.0,995.4 987.5,996.4 978.1,997.1 968.7,997.6 959.4,997.9 950.0,998.0 940.7,997.8 931.5,997.4 922.3,996.8 913.2,995.9 904.1,994.9 895.1,993.6 886.2,992.0 877.4,990.3 868.6,988.3 860.0,986.1 851.4,983.7 843.0,981.1 834.7,978.2 826.5,975.2 818.4,971.9 810.5,968.4 802.7,964.7 795.0,960.8 787.5,956.7 780.2,952.4 773.0,947.9 765.9,943.2 759.1,938.4 752.4,933.3 745.8,928.1 739.5,922.6 733.3,917.0 727.4,911.3 721.6,905.3 716.0,899.2 710.6,892.9 705.5,886.5 700.5,879.9 695.8,873.2 691.2,866.4 686.9,859.4 682.8,852.2 679.0,845.0 675.3,837.6 671.9,830.1 668.7,822.5 665.8,814.8 663.1,806.9 660.6,799.0 658.4,791.0 656.4,782.9 654.7,774.7 653.1,766.5 651.9,758.2 650.9,749.8 650.1,741.3 649.6,732.8 649.3,724.3 649.3,715.7 649.5,707.1 650.0,698.5 650.7,689.8 651.6,681.1 652.9,672.4 654.3,663.7 656.0,655.1 657.9,646.4 660.1,637.7 662.5,629.0 665.2,620.4 668.1,611.8 671.2,603.3 674.6,594.7 678.2,586.3 682.0,577.9 686.0,569.5 690.3,561.2 694.8,553.0 699.5,544.9 704.4,536.8 709.5,528.8 714.8,521.0 720.4,513.2 726.1,505.5 732.0,498.0 738.1,490.5 744.5,483.2 750.9,476.0 757.6,468.9 764.4,462.0 771.4,455.2 778.6,448.6 785.9,442.1 793.4,435.7 801.0,429.5 808.8,423.5 816.7,417.6 824.7,411.9 832.9,406.4 841.2,401.1 849.6,395.9 858.1,391.0 866.7,386.2 875.5,381.6 884.3,377.2 893.2,373.0 902.1,369.0 911.2,365.2 920.3,361.6 929.5,358.2 938.7,355.0 948.0,352.1 957.3,349.4 966.7,346.8 976.1,344.5 985.5,342.4 994.9,340.6 1004.4,338.9 1013.8,337.5 1023.3,336.3 1032.7,335.3 1042.1,334.6 1051.5,334.1 1060.9,333.8 1070.2,333.8 1079.5,333.9 1088.8,334.3 1098.0,334.9 1107.1,335.8 1116.2,336.9 1125.2,338.2 1134.1,339.7 1142.9,341.5 1151.6,343.4 1160.3,345.6 1168.8,348.0 1177.3,350.7 1185.6,353.5 1193.8,356.6 1201.8,359.8 1209.8,363.3 1217.6,367.0 1225.2,370.9 1232.7,375.0 1240.1,379.3 1247.3,383.8 1254.3,388.5 1261.2,393.4 1267.9,398.4 1274.4,403.7 1280.8,409.1 1286.9,414.7 1292.9,420.5 1298.7,426.4 1304.2,432.5 1309.6,438.8 1314.8,445.2 1319.7,451.8 1324.5,458.5 1329.0,465.4 1333.3,472.4 1337.4,479.5 1341.3,486.8 1344.9,494.2 1348.3,501.7 1351.5,509.3 1354.5,517.0 1357.2,524.8 1359.6,532.7 1361.9,540.7 1363.9,548.8 1365.6,557.0 1367.1,565.3 1368.4,573.6" fill="none" stroke="#17181a" stroke-width="1.9" clip-path="url(#notop)"/>
<polygon points="1358.8,563.8 1359.6,572.2 1360.1,580.7 1360.3,589.2 1360.4,597.8 1360.2,606.4 1359.7,615.1 1359.0,623.7 1358.0,632.4 1356.8,641.1 1355.4,649.8 1353.7,658.5 1351.7,667.2 1349.5,675.8 1347.1,684.5 1344.5,693.1 1341.6,701.7 1338.4,710.3 1335.1,718.8 1331.5,727.3 1327.7,735.7 1323.6,744.0 1319.4,752.3 1314.9,760.5 1310.2,768.7 1305.3,776.7 1300.1,784.7 1294.8,792.6 1289.3,800.3 1283.6,808.0 1277.6,815.6 1271.5,823.0 1265.2,830.3 1258.7,837.5 1252.1,844.6 1245.2,851.5 1238.2,858.3 1231.1,865.0 1223.7,871.5 1216.3,877.8 1208.6,884.0 1200.9,890.0 1193.0,895.9 1184.9,901.6 1176.7,907.1 1168.5,912.5 1160.0,917.6 1151.5,922.6 1142.9,927.4 1134.2,932.0 1125.4,936.4 1116.5,940.6 1107.5,944.6 1098.5,948.3 1089.3,951.9 1080.2,955.3 1070.9,958.5 1061.6,961.4 1052.3,964.2 1043.0,966.7 1033.6,969.0 1024.1,971.1 1014.7,973.0 1005.3,974.6 995.8,976.0 986.4,977.2 976.9,978.2 967.5,978.9 958.1,979.4 948.8,979.7 939.4,979.8 930.1,979.6 920.9,979.2 911.7,978.6 902.6,977.7 893.5,976.7 884.5,975.4 875.6,973.8 866.8,972.1 858.0,970.1 849.4,967.9 840.8,965.5 832.4,962.9 824.1,960.0 815.9,957.0 807.8,953.7 799.9,950.2 792.1,946.5 784.4,942.6 776.9,938.5 769.6,934.2 762.4,929.7 755.3,925.0 748.5,920.2 741.8,915.1 735.2,909.9 728.9,904.4 722.7,898.8 716.8,893.1 711.0,887.1 705.4,881.0 700.0,874.7 694.9,868.3 689.9,861.7 685.2,855.0 680.6,848.2 676.3,841.2 672.2,834.0 668.4,826.8 664.7,819.4 661.3,811.9 658.1,804.3 655.2,796.6 652.5,788.7 650.0,780.8 647.8,772.8 645.8,764.7 644.1,756.5 642.5,748.3 641.3,740.0 640.3,731.6 639.5,723.1 639.0,714.6 638.7,706.1 638.7,697.5 638.9,688.9 639.4,680.3 640.1,671.6 641.0,662.9 642.3,654.2 643.7,645.5 645.4,636.9 647.3,628.2 649.5,619.5 651.9,610.8 654.6,602.2 657.5,593.6 660.6,585.1 664.0,576.5 667.6,568.1 671.4,559.7 675.4,551.3 679.7,543.0 684.2,534.8 688.9,526.7 693.8,518.6 698.9,510.6 704.2,502.8 709.8,495.0 715.5,487.3 721.4,479.8 727.5,472.3 733.9,465.0 740.3,457.8 747.0,450.7 753.8,443.8 760.8,437.0 768.0,430.4 775.3,423.9 782.8,417.5 790.4,411.3 798.2,405.3 806.1,399.4 814.1,393.7 822.3,388.2 830.6,382.9 839.0,377.7 847.5,372.8 856.1,368.0 864.9,363.4 873.7,359.0 882.6,354.8 891.5,350.8 900.6,347.0 909.7,343.4 918.9,340.0 928.1,336.8 937.4,333.9 946.7,331.2 956.1,328.6 965.5,326.3 974.9,324.2 984.3,322.4 993.8,320.7 1003.2,319.3 1012.7,318.1 1022.1,317.1 1031.5,316.4 1040.9,315.9 1050.3,315.6 1059.6,315.6 1068.9,315.7 1078.2,316.1 1087.4,316.7 1096.5,317.6 1105.6,318.7 1114.6,320.0 1123.5,321.5 1132.3,323.3 1141.0,325.2 1149.7,327.4 1158.2,329.8 1166.7,332.5 1175.0,335.3 1183.2,338.4 1191.2,341.6 1199.2,345.1 1207.0,348.8 1214.6,352.7 1222.1,356.8 1229.5,361.1 1236.7,365.6 1243.7,370.3 1250.6,375.2 1257.3,380.2 1263.8,385.5 1270.2,390.9 1276.3,396.5 1282.3,402.3 1288.1,408.2 1293.6,414.3 1299.0,420.6 1304.2,427.0 1309.1,433.6 1313.9,440.3 1318.4,447.2 1322.7,454.2 1326.8,461.3 1330.7,468.6 1334.3,476.0 1337.7,483.5 1340.9,491.1 1343.9,498.8 1346.6,506.6 1349.0,514.5 1351.3,522.5 1353.3,530.6 1355.0,538.8 1356.5,547.1 1357.8,555.4" fill="#99e6ff" stroke="#17181a" stroke-width="1.9"/>
<clipPath id="op"><polygon points="1051.7,629.0 1335.8,562.6 1337.2,575.3 1061.4,639.7 1335.8,633.6 1333.9,646.8 1059.5,652.9 1317.9,705.4 1312.8,718.2 1054.3,665.8 1283.0,774.0 1274.9,785.9 1046.3,677.7 1233.0,836.0 1222.4,846.3 1035.7,688.0 1170.6,887.9 1158.1,896.1 1023.2,696.1 1099.0,927.0 1085.3,932.6 1009.5,701.7 1022.1,951.2 1007.9,953.9 995.2,704.4 944.1,959.3 930.0,958.9 981.2,704.1 869.0,950.7 855.9,947.4 968.1,700.8 800.8,926.0 789.4,919.8 956.7,694.6 743.3,886.5 734.1,877.8 947.6,685.9 699.4,834.2 693.0,823.5 941.3,675.2 671.4,772.0 668.2,759.8 938.0,663.1 661.0,703.2 661.1,690.2 938.1,650.1 668.6,631.4 672.0,618.3 941.4,637.0 693.9,560.5 700.3,547.9 947.8,624.4 735.4,494.2 744.6,482.9 957.0,613.1 791.0,436.1 802.5,426.6 968.4,603.6 857.8,389.3 870.9,382.2 981.5,596.5 932.0,356.2 946.1,351.8 995.6,592.1 1009.9,338.7 1024.2,337.3 1009.8,590.7 1087.2,337.7 1100.9,339.3 1023.6,592.3 1159.9,353.1 1172.3,357.7 1036.0,596.9 1224.0,384.3 1234.5,391.6 1046.5,604.1 1276.1,429.5 1284.1,439.1 1054.5,613.7 1313.5,486.3 1318.6,497.7"/></clipPath>
<polygon points="1051.7,629.0 1335.8,562.6 1337.2,575.3 1061.4,639.7 1335.8,633.6 1333.9,646.8 1059.5,652.9 1317.9,705.4 1312.8,718.2 1054.3,665.8 1283.0,774.0 1274.9,785.9 1046.3,677.7 1233.0,836.0 1222.4,846.3 1035.7,688.0 1170.6,887.9 1158.1,896.1 1023.2,696.1 1099.0,927.0 1085.3,932.6 1009.5,701.7 1022.1,951.2 1007.9,953.9 995.2,704.4 944.1,959.3 930.0,958.9 981.2,704.1 869.0,950.7 855.9,947.4 968.1,700.8 800.8,926.0 789.4,919.8 956.7,694.6 743.3,886.5 734.1,877.8 947.6,685.9 699.4,834.2 693.0,823.5 941.3,675.2 671.4,772.0 668.2,759.8 938.0,663.1 661.0,703.2 661.1,690.2 938.1,650.1 668.6,631.4 672.0,618.3 941.4,637.0 693.9,560.5 700.3,547.9 947.8,624.4 735.4,494.2 744.6,482.9 957.0,613.1 791.0,436.1 802.5,426.6 968.4,603.6 857.8,389.3 870.9,382.2 981.5,596.5 932.0,356.2 946.1,351.8 995.6,592.1 1009.9,338.7 1024.2,337.3 1009.8,590.7 1087.2,337.7 1100.9,339.3 1023.6,592.3 1159.9,353.1 1172.3,357.7 1036.0,596.9 1224.0,384.3 1234.5,391.6 1046.5,604.1 1276.1,429.5 1284.1,439.1 1054.5,613.7 1313.5,486.3 1318.6,497.7" fill="#3c3c3c"/>
<g clip-path="url(#op)">
<polygon points="1051.7,629.0 1335.8,562.6 1346.4,580.8 1062.3,647.2" fill="#484b4e" stroke="#17181a" stroke-width="0.9"/>
<polygon points="1061.4,639.7 1335.8,633.6 1346.4,651.8 1072.0,657.9" fill="#43464a" stroke="#17181a" stroke-width="0.9"/>
<polygon points="1059.5,652.9 1317.9,705.4 1328.5,723.6 1070.1,671.1" fill="#3d4044" stroke="#17181a" stroke-width="0.9"/>
<polygon points="1054.3,665.8 1283.0,774.0 1293.6,792.2 1064.9,684.0" fill="#36393c" stroke="#17181a" stroke-width="0.9"/>
<polygon points="1046.3,677.7 1233.0,836.0 1243.6,854.2 1056.9,695.9" fill="#2e3033" stroke="#17181a" stroke-width="0.9"/>
<polygon points="1035.7,688.0 1170.6,887.9 1181.2,906.1 1046.3,706.2" fill="#25272a" stroke="#17181a" stroke-width="0.9"/>
<polygon points="1085.3,932.6 1009.5,701.7 1020.1,719.9 1095.9,950.8" fill="#2b2d30" stroke="#17181a" stroke-width="0.9"/>
<polygon points="1007.9,953.9 995.2,704.4 1005.8,722.6 1018.5,972.1" fill="#333639" stroke="#17181a" stroke-width="0.9"/>
<polygon points="930.0,958.9 981.2,704.1 991.8,722.3 940.6,977.1" fill="#3b3e41" stroke="#17181a" stroke-width="0.9"/>
<polygon points="855.9,947.4 968.1,700.8 978.7,719.0 866.5,965.6" fill="#424448" stroke="#17181a" stroke-width="0.9"/>
<polygon points="789.4,919.8 956.7,694.6 967.3,712.8 800.0,938.0" fill="#46494d" stroke="#17181a" stroke-width="0.9"/>
<polygon points="734.1,877.8 947.6,685.9 958.2,704.1 744.7,896.0" fill="#494c50" stroke="#17181a" stroke-width="0.9"/>
<polygon points="693.0,823.5 941.3,675.2 951.9,693.4 703.6,841.7" fill="#4a4d51" stroke="#17181a" stroke-width="0.9"/>
<polygon points="671.4,772.0 668.2,759.8 678.8,778.0 682.0,790.2" fill="#2d2f32" stroke="#17181a" stroke-width="0.9"/>
<polygon points="668.2,759.8 938.0,663.1 948.6,681.3 678.8,778.0" fill="#494c50" stroke="#17181a" stroke-width="0.9"/>
<polygon points="661.0,703.2 661.1,690.2 671.7,708.4 671.6,721.4" fill="#35383b" stroke="#17181a" stroke-width="0.9"/>
<polygon points="661.1,690.2 938.1,650.1 948.7,668.3 671.7,708.4" fill="#46494d" stroke="#17181a" stroke-width="0.9"/>
<polygon points="668.6,631.4 672.0,618.3 682.6,636.5 679.2,649.6" fill="#3d3f43" stroke="#17181a" stroke-width="0.9"/>
<polygon points="672.0,618.3 941.4,637.0 952.0,655.2 682.6,636.5" fill="#414448" stroke="#17181a" stroke-width="0.9"/>
<polygon points="693.9,560.5 700.3,547.9 710.9,566.1 704.5,578.7" fill="#434549" stroke="#17181a" stroke-width="0.9"/>
<polygon points="700.3,547.9 947.8,624.4 958.4,642.6 710.9,566.1" fill="#3b3d41" stroke="#17181a" stroke-width="0.9"/>
<polygon points="735.4,494.2 744.6,482.9 755.2,501.1 746.0,512.4" fill="#474a4e" stroke="#17181a" stroke-width="0.9"/>
<polygon points="744.6,482.9 957.0,613.1 967.6,631.3 755.2,501.1" fill="#333539" stroke="#17181a" stroke-width="0.9"/>
<polygon points="791.0,436.1 802.5,426.6 813.1,444.8 801.6,454.3" fill="#4a4d51" stroke="#17181a" stroke-width="0.9"/>
<polygon points="802.5,426.6 968.4,603.6 979.0,621.8 813.1,444.8" fill="#2a2c30" stroke="#17181a" stroke-width="0.9"/>
<polygon points="968.4,603.6 857.8,389.3 868.4,407.5 979.0,621.8" fill="#26282b" stroke="#17181a" stroke-width="0.9"/>
<polygon points="857.8,389.3 870.9,382.2 881.5,400.4 868.4,407.5" fill="#4a4d51" stroke="#17181a" stroke-width="0.9"/>
<polygon points="981.5,596.5 932.0,356.2 942.6,374.4 992.1,614.7" fill="#2f3134" stroke="#17181a" stroke-width="0.9"/>
<polygon points="932.0,356.2 946.1,351.8 956.7,370.0 942.6,374.4" fill="#494c50" stroke="#17181a" stroke-width="0.9"/>
<polygon points="995.6,592.1 1009.9,338.7 1020.5,356.9 1006.2,610.3" fill="#37393d" stroke="#17181a" stroke-width="0.9"/>
<polygon points="1009.9,338.7 1024.2,337.3 1034.8,355.5 1020.5,356.9" fill="#45484c" stroke="#17181a" stroke-width="0.9"/>
<polygon points="1009.8,590.7 1087.2,337.7 1097.8,355.9 1020.4,608.9" fill="#3e4144" stroke="#17181a" stroke-width="0.9"/>
<polygon points="1087.2,337.7 1100.9,339.3 1111.5,357.5 1097.8,355.9" fill="#404346" stroke="#17181a" stroke-width="0.9"/>
<polygon points="1023.6,592.3 1159.9,353.1 1170.5,371.3 1034.2,610.5" fill="#44474a" stroke="#17181a" stroke-width="0.9"/>
<polygon points="1159.9,353.1 1172.3,357.7 1182.9,375.9 1170.5,371.3" fill="#393c3f" stroke="#17181a" stroke-width="0.9"/>
<polygon points="1036.0,596.9 1224.0,384.3 1234.6,402.5 1046.6,615.1" fill="#484b4f" stroke="#17181a" stroke-width="0.9"/>
<polygon points="1224.0,384.3 1234.5,391.6 1245.1,409.8 1234.6,402.5" fill="#313337" stroke="#17181a" stroke-width="0.9"/>
<polygon points="1046.5,604.1 1276.1,429.5 1286.7,447.7 1057.1,622.3" fill="#4a4d51" stroke="#17181a" stroke-width="0.9"/>
<polygon points="1276.1,429.5 1284.1,439.1 1294.7,457.3 1286.7,447.7" fill="#282a2e" stroke="#17181a" stroke-width="0.9"/>
<polygon points="1054.5,613.7 1313.5,486.3 1324.1,504.5 1065.1,631.9" fill="#4a4d51" stroke="#17181a" stroke-width="0.9"/>
</g>
<polygon points="1051.7,629.0 1335.8,562.6 1337.2,575.3 1061.4,639.7 1335.8,633.6 1333.9,646.8 1059.5,652.9 1317.9,705.4 1312.8,718.2 1054.3,665.8 1283.0,774.0 1274.9,785.9 1046.3,677.7 1233.0,836.0 1222.4,846.3 1035.7,688.0 1170.6,887.9 1158.1,896.1 1023.2,696.1 1099.0,927.0 1085.3,932.6 1009.5,701.7 1022.1,951.2 1007.9,953.9 995.2,704.4 944.1,959.3 930.0,958.9 981.2,704.1 869.0,950.7 855.9,947.4 968.1,700.8 800.8,926.0 789.4,919.8 956.7,694.6 743.3,886.5 734.1,877.8 947.6,685.9 699.4,834.2 693.0,823.5 941.3,675.2 671.4,772.0 668.2,759.8 938.0,663.1 661.0,703.2 661.1,690.2 938.1,650.1 668.6,631.4 672.0,618.3 941.4,637.0 693.9,560.5 700.3,547.9 947.8,624.4 735.4,494.2 744.6,482.9 957.0,613.1 791.0,436.1 802.5,426.6 968.4,603.6 857.8,389.3 870.9,382.2 981.5,596.5 932.0,356.2 946.1,351.8 995.6,592.1 1009.9,338.7 1024.2,337.3 1009.8,590.7 1087.2,337.7 1100.9,339.3 1023.6,592.3 1159.9,353.1 1172.3,357.7 1036.0,596.9 1224.0,384.3 1234.5,391.6 1046.5,604.1 1276.1,429.5 1284.1,439.1 1054.5,613.7 1313.5,486.3 1318.6,497.7" fill="none" stroke="#17181a" stroke-width="1.7" stroke-linejoin="round"/>
<line x1="1034.2" y1="968.9" x2="1044.8" y2="987.1" stroke="#17181a" stroke-width="1.2"/>
<path d="M1396 117.500l12 12h-24z" fill="#77787a"/>
<path d="M1396 248.500l12-12h-24z" fill="#77787a"/>
<path d="M1331 183l12-12v24z" fill="#77787a"/>
<path d="M1461.500 183l-12-12v24z" fill="#77787a"/>
<circle cx="1453" cy="125.500" r="6" fill="#77787a"/>
<path d="M1347 151l2-15.500l5.500 5.500c7-8 14-12 23.500-15l1 7c-8 2.500-13.500 6-19 12.500l5.500 5.500z" fill="#77787a"/>
<path d="M1445 151l-2-15.500l-5.500 5.500c-7-8-14-12-23.500-15l-1 7c8 2.500 13.500 6 19 12.500l-5.500 5.500z" fill="#77787a"/>
<path d="M1430.500 226l10-5l10 4.500v10.500l-10 4.500l-10-5z" fill="#77787a" stroke="#3c3c3c" stroke-width="0.800"/><path d="M1430.500 226l10 4.500l10-5M1440.500 230.500v10" fill="none" stroke="#3c3c3c" stroke-width="0.900"/>
<g transform="translate(1320,110) scale(0.117828)">
<path d="M685 268L440 330Q385 350 360 410L328 465Q318 490 322 540L340 640L352 710Q360 760 385 800L450 905Q480 950 530 962L600 968L870 900Q900 892 920 860L960 800Q970 780 968 750L950 600L925 460Q915 420 890 385L850 335Q820 300 770 290Z" fill="#7b7c7e" stroke="#5a5b5d" stroke-width="6"/>
<g fill="none" stroke="#505153" stroke-width="5.500" stroke-linejoin="round"><path d="M685 275L750 332L770 560L720 635L465 700L385 660"/><path d="M750 332L835 348L865 580L770 560"/><path d="M865 580L880 672L825 735L740 700L720 635"/><path d="M465 700L478 778L825 735"/><path d="M478 778L440 820L352 700"/><path d="M478 778L505 950"/><path d="M825 735L897 862L870 900"/><path d="M835 348L850 338M880 672L965 790M897 862L960 800"/><path d="M385 660L330 480M385 660L352 700"/></g>
<text transform="translate(530,490) rotate(80) skewX(-14)" font-size="100" font-family="Liberation Sans,Noto Sans CJK SC,sans-serif" fill="#57585a" text-anchor="middle">上视图</text>
<text transform="translate(672,880) rotate(-13) skewX(-12) scale(1.15,0.85)" font-size="98" font-family="Liberation Sans,Noto Sans CJK SC,sans-serif" fill="#57585a" text-anchor="middle">右视图</text>
<text transform="translate(890,580) rotate(80) scale(1,0.45)" font-size="96" font-family="Liberation Sans,Noto Sans CJK SC,sans-serif" fill="#57585a" text-anchor="middle" fill-opacity="0.8">后视图</text>
</g>
<path d="M1369.500 176.500l49-11" stroke="#5fe063" stroke-width="1.600"/>
<path d="M1369.500 176.500l-15-23" stroke="#2a2ac8" stroke-width="1.600"/><path d="M1369.500 176.500l-9-14" stroke="#6a6ae8" stroke-width="1.600"/>
<path d="M1369.500 177.500l4.500 43" stroke="#d85a5a" stroke-width="1.600"/><circle cx="1374" cy="220" r="1" fill="#e01b1b"/>
<path d="M1412.500 1182l-7.500-12" stroke="#20209a" stroke-width="2"/><path d="M1397.200 1158.300l10.800 8.200l-7.300 6z" fill="#20209a"/>
<path d="M1412.500 1182l27-7" stroke="#1f8b1f" stroke-width="1.800"/><path d="M1449.700 1173l-11.500 6.500l-2.200-7.800z" fill="#1f8b1f"/>
<path d="M1412 1182.500l2.500 23" stroke="#8b2020" stroke-width="2"/><path d="M1416 1219l-6.200-12.500l10-1z" fill="#8b2020"/>
<text x="1398.500" y="1157" font-family="Liberation Sans,sans-serif" font-size="9" fill="#000">Z</text><text x="1451.500" y="1172" font-family="Liberation Sans,sans-serif" font-size="9" fill="#000">Y</text><text x="1416.500" y="1220" font-family="Liberation Sans,sans-serif" font-size="9" fill="#000">X</text>
</svg>
<div class="abs" style="left:0;top:0;width:1px;height:1231px;background:#000"></div><div class="abs" style="left:1px;top:1px;width:1px;height:1230px;background:#555"></div>
</div></body></html>
